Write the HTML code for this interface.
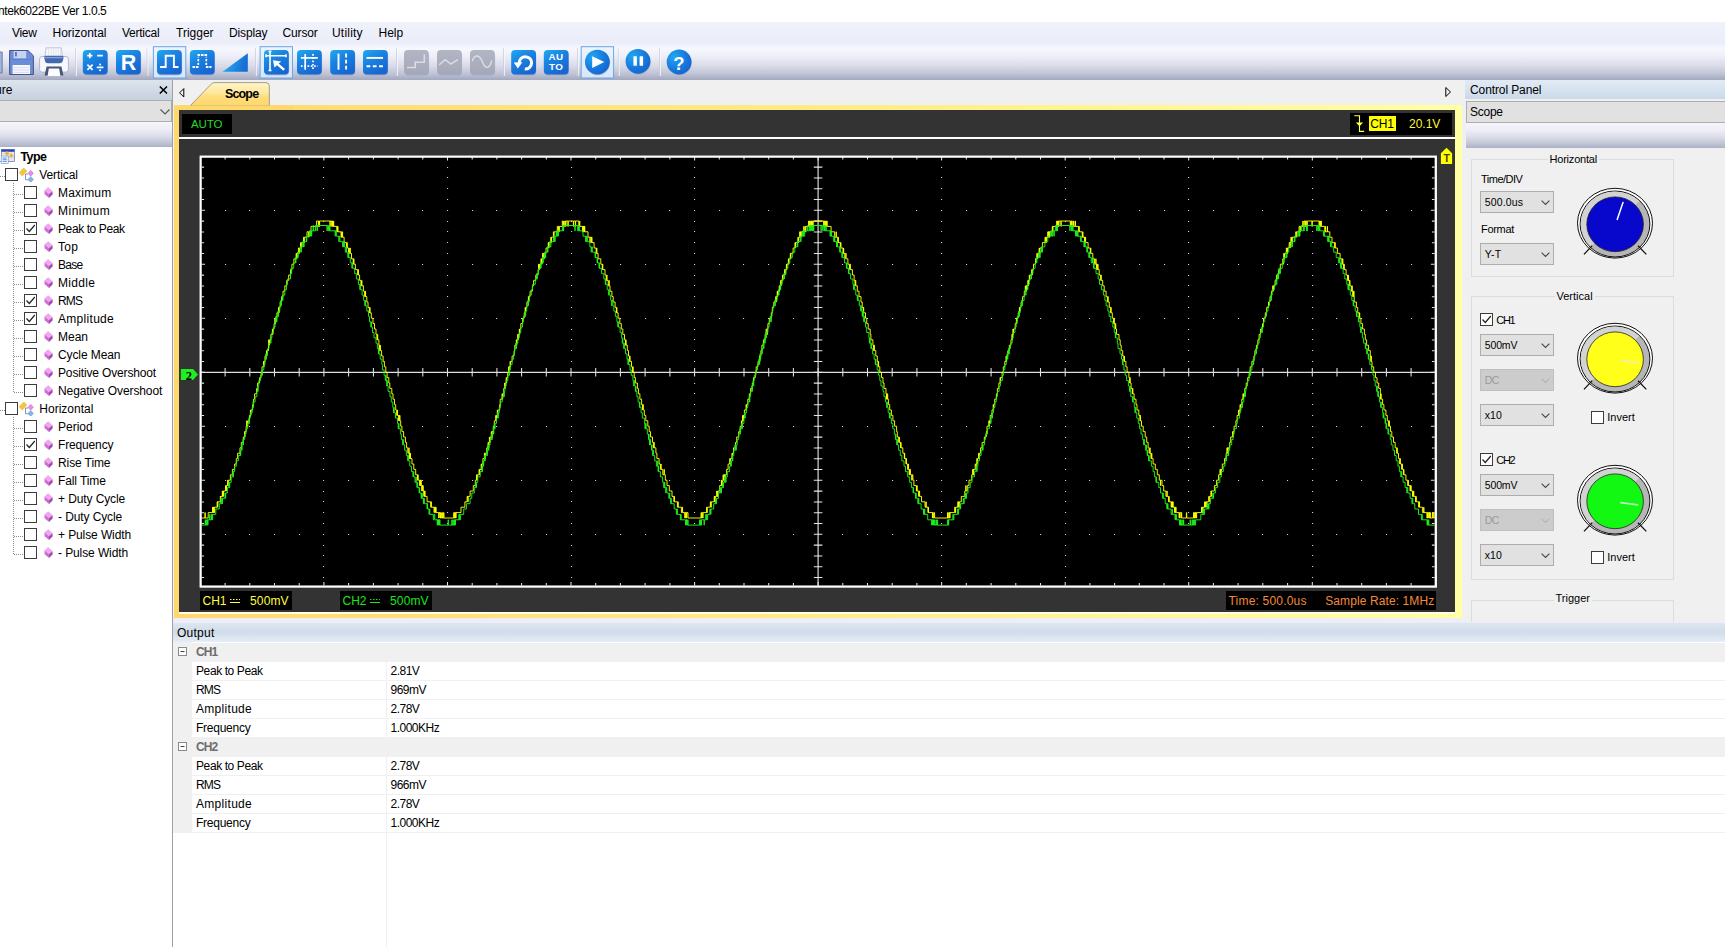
<!DOCTYPE html>
<html><head><meta charset="utf-8"><title>Hantek6022BE</title>
<style>
*{box-sizing:border-box;margin:0;padding:0}
html,body{width:1725px;height:947px;overflow:hidden;background:#fff}
body{position:relative;font-family:"Liberation Sans",sans-serif;font-size:12px;color:#000}
.a{position:absolute;white-space:nowrap}
.t{position:absolute;white-space:nowrap;line-height:14px;height:14px}
#menubar{left:0;top:22px;width:1725px;height:22px;background:linear-gradient(#eff1fb,#ebedf9)}
#toolbar{left:0;top:44px;width:1725px;height:36px;background:linear-gradient(#eff1fb 0%,#f7f8fe 14%,#ecedf7 36%,#d8dae7 62%,#bec2d4 84%,#a9adc4 97%,#a4a9c0 100%)}
#lhead{left:0;top:80px;width:172px;height:20px;background:linear-gradient(#dde4ed,#c6d1df)}
#lcombo{left:-2px;top:100px;width:174px;height:22px;background:#e1e1e1;border:1px solid #adadad}
#lstrip{left:0;top:122px;width:172px;height:25px;background:linear-gradient(#f6f7fc 0%,#ecedf6 30%,#d8dae7 60%,#bec2d4 85%,#adb1c6 100%)}
#ltree{left:0;top:147px;width:172px;height:800px;background:#fff}
#lsplit{left:172px;top:80px;width:2px;height:867px;background:#f0f0f0;border-left:1px solid #a0a0a0}
#tabbar{left:174px;top:80px;width:1291px;height:26px;background:#f0f0f0}
#scopeframe{left:173.6px;top:105.3px;width:1288px;height:512.6px;background:linear-gradient(90deg,#ffd86b,#ffffa3)}
#scopebg{left:179.3px;top:110.1px;width:1275.8px;height:501.7px;background:#333}
#rpanel{left:1465px;top:80px;width:260px;height:542px;background:#f0f0f0}
#rgap{left:1462px;top:80px;width:3px;height:542px;background:#f0f0f0}
#rhead{left:1465px;top:80px;width:260px;height:19px;background:linear-gradient(#e3ebf5,#c9d9ea)}
#rcombo{left:1466px;top:100.5px;width:262px;height:22px;background:#e1e1e1;border:1px solid #adadad}
#rstrip{left:1466px;top:122.5px;width:260px;height:25px;background:linear-gradient(#f6f7fc 0%,#ecedf6 30%,#d8dae7 60%,#bec2d4 85%,#adb1c6 100%)}
#ohead{left:173px;top:622.5px;width:1552px;height:20px;background:linear-gradient(#dde6f0,#d0dcea 45%,#e8eef6)}
#opanel{left:173px;top:642px;width:1552px;height:305px;background:#fff}
.grp{position:absolute;border:1px solid #dcdcdc}
.grp>span{position:absolute;background:#f0f0f0;padding:0 2px;line-height:14px;top:-8px}
.combo{position:absolute;width:74px;height:22px;background:#e1e1e1;border:1px solid #adadad;font-size:10.5px;line-height:21.6px;padding-left:3.5px;letter-spacing:-0.15px}
.combo.dis{background:#cccccc;border-color:#bfbfbf;color:#9a9a9a}
.combo svg{position:absolute;right:3.8px;top:8.4px}
.cb{position:absolute;width:13px;height:13px;border:1px solid #3c3c3c;background:#fff}
.cb svg{position:absolute;left:0;top:0}
.sbox{position:absolute;background:#000;height:19px;line-height:20.4px;font-size:12px}
.orow{position:absolute;left:0;width:1552px;height:19px;border-bottom:1px solid #f0f0f0}
.ohdr{position:absolute;left:0;width:1552px;height:19px;background:#f0f0f0;color:#6d6d6d;font-weight:bold}
</style></head>
<body>
<!-- title -->
<div class="t" id="title" style="left:-2px;top:4px;letter-spacing:-0.42px">ntek6022BE Ver 1.0.5</div>
<!-- menubar -->
<div class="a" id="menubar"></div>
<div class="t" style="left:12px;top:26.4px;letter-spacing:-0.3px">View</div>
<div class="t" style="left:52.5px;top:26.4px">Horizontal</div>
<div class="t" style="left:122px;top:26.4px;letter-spacing:-0.25px">Vertical</div>
<div class="t" style="left:176px;top:26.4px">Trigger</div>
<div class="t" style="left:229px;top:26.4px;letter-spacing:-0.15px">Display</div>
<div class="t" style="left:282.5px;top:26.4px;letter-spacing:-0.15px">Cursor</div>
<div class="t" style="left:332px;top:26.4px;letter-spacing:0.2px">Utility</div>
<div class="t" style="left:378.5px;top:26.4px">Help</div>
<!-- toolbar -->
<div class="a" id="toolbar"></div>
<svg class="a" style="left:0;top:44px" width="720" height="36" viewBox="0 0 720 36">
<defs>
<linearGradient id="bg" x1="0" y1="0" x2="0.6" y2="1"><stop offset="0" stop-color="#22aaf3"/><stop offset="0.45" stop-color="#1a82e0"/><stop offset="1" stop-color="#1866d0"/></linearGradient>
<linearGradient id="gg" x1="0" y1="0" x2="0" y2="1"><stop offset="0" stop-color="#b2b5c3"/><stop offset="1" stop-color="#a5a8b8"/></linearGradient>
<radialGradient id="cg" cx="0.3" cy="0.3" r="0.85"><stop offset="0" stop-color="#20a8f2"/><stop offset="0.55" stop-color="#187ade"/><stop offset="1" stop-color="#1560c8"/></radialGradient>
<linearGradient id="sel" x1="0" y1="0" x2="0" y2="1"><stop offset="0" stop-color="#edf4fd"/><stop offset="1" stop-color="#d6e6f9"/></linearGradient>
<linearGradient id="tg" x1="0" y1="0" x2="1" y2="0.2"><stop offset="0" stop-color="#25b8f4"/><stop offset="1" stop-color="#186cd4"/></linearGradient>
</defs>
<path d="M-2 8H2.2V29H-2Z" fill="#9fb4dc" stroke="#5a6a98" stroke-width="0.8"/>
<g transform="translate(9 6)">
<path d="M0.6 0.5H19L24.4 5.8V24.5H0.6Z" fill="#6b8dd8" stroke="#44558a" stroke-width="1"/>
<rect x="4.6" y="1" width="12.6" height="7.4" fill="#c6d3f1"/>
<rect x="6.2" y="2" width="1.5" height="4.4" fill="#4a5f9c"/>
<path d="M1.4 9.4H23.6" stroke="#5c7ecb" stroke-width="0.9"/>
<rect x="3.6" y="15" width="17.4" height="9" fill="#f6f8fd"/>
<path d="M4.5 17.6H20M4.5 20H20M4.5 22.4H20" stroke="#c9d1ea" stroke-width="0.7"/>
</g>
<g transform="translate(39 3)">
<path d="M7 0.8H22.4L23.4 10H6Z" fill="#f6f7fb" stroke="#b4b9cf" stroke-width="0.8"/>
<path d="M9.5 1.5V9M12 1.5V9M14.5 1.5V9M17 1.5V9M19.5 1.5V9M21.5 1.5V9" stroke="#dcdfea" stroke-width="0.7"/>
<rect x="0.6" y="9.5" width="28.8" height="15.6" rx="2.6" fill="#f7f8fc" stroke="#a8b0cf" stroke-width="0.9"/>
<path d="M6 8.8H23.6Q24.8 8.8 24.4 11.5L23.8 14Q23.2 16.2 20.6 16.2H9Q6.4 16.2 6 14L5.4 11.5Q5 8.8 6 8.8Z" fill="#4467ad"/>
<path d="M6.2 10.6H23.6" stroke="#86a2da" stroke-width="1.3"/>
<path d="M5.6 28.6L7.6 19.6H22.4L24.4 28.6Z" fill="#465475"/>
<path d="M8.6 29L9.8 21.6H20.2L21.4 29Z" fill="#fcfcfe"/>
</g>
<path d="M75.5 4V32" stroke="#c9cbd9" stroke-width="1" opacity="0.7"/><path d="M76.5 4V32" stroke="#fafaff" stroke-width="1" opacity="0.7"/>
<g transform="translate(82.8 6)"><rect x="0.5" y="1.4" width="24.6" height="24" rx="4" fill="#8092c0" opacity="0.45"/><rect x="0" y="0" width="24.8" height="24.5" rx="4" fill="url(#bg)"/><path d="M4.4 5.6H9.6M7 3V8.2M14.4 5.6H20M4.6 14.6L9.8 19.8M9.8 14.6L4.6 19.8M14 17.3H20.6" stroke="#fff" fill="none" stroke-width="1.7"/><circle cx="17.3" cy="14.4" r="1" fill="#fff"/><circle cx="17.3" cy="20.2" r="1" fill="#fff"/></g>
<g transform="translate(116 6)"><rect x="0.5" y="1.4" width="24.6" height="24" rx="4" fill="#8092c0" opacity="0.45"/><rect x="0" y="0" width="24.8" height="24.5" rx="4" fill="url(#bg)"/><text x="12.6" y="20.3" font-family="Liberation Sans,sans-serif" font-weight="bold" font-size="21.5" fill="#fff" text-anchor="middle">R</text></g>
<path d="M147 4V32" stroke="#c9cbd9" stroke-width="1" opacity="0.7"/><path d="M148 4V32" stroke="#fafaff" stroke-width="1" opacity="0.7"/>
<rect x="153.4" y="2.7" width="32.4" height="31.3" fill="url(#sel)" stroke="#6aa5e6" stroke-width="1"/>
<g transform="translate(157 6)"><rect x="0.5" y="1.4" width="24.6" height="24" rx="4" fill="#8092c0" opacity="0.45"/><rect x="0" y="0" width="24.8" height="24.5" rx="4" fill="url(#bg)"/><path d="M3 17H8.7V5.7H16.9V17H21.5" stroke="#fff" fill="none" stroke-width="1.9"/></g>
<g transform="translate(189.9 6)"><rect x="0.5" y="1.4" width="24.6" height="24" rx="4" fill="#8092c0" opacity="0.45"/><rect x="0" y="0" width="24.8" height="24.5" rx="4" fill="url(#bg)"/><path d="M2.6 17H8.6M16 17H21.6" stroke="#fff" fill="none" stroke-width="1.8" stroke-dasharray="2.6 0.8"/><path d="M8.4 15V6.8M16.4 15V6.8" stroke="#fff" fill="none" stroke-width="1.7" stroke-dasharray="2.2 1.5"/><path d="M7.6 5H17.2" stroke="#fff" fill="none" stroke-width="1.8" stroke-dasharray="2.6 0.9"/></g>
<path d="M222.6 27.8L247.8 9.2V27.8Z" fill="url(#tg)"/>
<path d="M255.5 4V32" stroke="#c9cbd9" stroke-width="1" opacity="0.7"/><path d="M256.5 4V32" stroke="#fafaff" stroke-width="1" opacity="0.7"/>
<rect x="260.1" y="2.7" width="32.4" height="31.3" fill="url(#sel)" stroke="#6aa5e6" stroke-width="1"/>
<g transform="translate(264 6)"><rect x="0.5" y="1.4" width="24.6" height="24" rx="4" fill="#8092c0" opacity="0.45"/><rect x="0" y="0" width="24.8" height="24.5" rx="4" fill="url(#bg)"/><path d="M2 5.7H22M6 1.4V20.5M2 4.2V7.2M22 4.2V7.2M4.5 1.4H7.5M4.5 20.5H7.5" stroke="#fff" fill="none" stroke-width="1.6"/><path d="M9 10.2L17.2 11.6L14.6 13.4L21 19L19.4 20.8L13 15.2L10.4 17.6Z" fill="#fff"/></g>
<g transform="translate(297 6)"><rect x="0.5" y="1.4" width="24.6" height="24" rx="4" fill="#8092c0" opacity="0.45"/><rect x="0" y="0" width="24.8" height="24.5" rx="4" fill="url(#bg)"/><path d="M8.2 4V19.7M3.9 7.9H20.8" stroke="#fff" fill="none" stroke-width="1.7"/><path d="M16 4V19.7M3.9 16.2H20.8" stroke="#fff" fill="none" stroke-width="1.7" stroke-dasharray="1.7 1.6"/></g>
<g transform="translate(330.2 6)"><rect x="0.5" y="1.4" width="24.6" height="24" rx="4" fill="#8092c0" opacity="0.45"/><rect x="0" y="0" width="24.8" height="24.5" rx="4" fill="url(#bg)"/><path d="M8.3 3.6V19.7" stroke="#fff" fill="none" stroke-width="1.9"/><path d="M15.9 3.6V19.7" stroke="#fff" fill="none" stroke-width="1.9" stroke-dasharray="3.8 2.3"/></g>
<g transform="translate(363 6)"><rect x="0.5" y="1.4" width="24.6" height="24" rx="4" fill="#8092c0" opacity="0.45"/><rect x="0" y="0" width="24.8" height="24.5" rx="4" fill="url(#bg)"/><path d="M3.5 7.9H20" stroke="#fff" fill="none" stroke-width="1.9"/><path d="M3.5 16.2H20" stroke="#fff" fill="none" stroke-width="1.9" stroke-dasharray="3.8 2.5"/></g>
<path d="M396.5 4V32" stroke="#c9cbd9" stroke-width="1" opacity="0.7"/><path d="M397.5 4V32" stroke="#fafaff" stroke-width="1" opacity="0.7"/>
<g transform="translate(404 6)"><rect x="0.5" y="1.4" width="24.6" height="24" rx="4" fill="#8092c0" opacity="0.45"/><rect x="0" y="0" width="24.8" height="24.5" rx="4" fill="url(#gg)"/><path d="M3 17.5H11.2V12.3H20.3V4.4" stroke="#dadce6" fill="none" stroke-width="1.6"/></g>
<g transform="translate(437 6)"><rect x="0.5" y="1.4" width="24.6" height="24" rx="4" fill="#8092c0" opacity="0.45"/><rect x="0" y="0" width="24.8" height="24.5" rx="4" fill="url(#gg)"/><path d="M2.1 14.9L8.2 9.7L13.9 14L20.8 9.7" stroke="#dadce6" fill="none" stroke-width="1.5"/></g>
<g transform="translate(470 6)"><rect x="0.5" y="1.4" width="24.6" height="24" rx="4" fill="#8092c0" opacity="0.45"/><rect x="0" y="0" width="24.8" height="24.5" rx="4" fill="url(#gg)"/><path d="M2.2 11.4C4 5 9 3.5 12.2 11.5S19.5 19.5 21.7 10.5" stroke="#dadce6" fill="none" stroke-width="1.5"/></g>
<path d="M503.5 4V32" stroke="#c9cbd9" stroke-width="1" opacity="0.7"/><path d="M504.5 4V32" stroke="#fafaff" stroke-width="1" opacity="0.7"/>
<g transform="translate(511.2 6)"><rect x="0.5" y="1.4" width="24.6" height="24" rx="4" fill="#8092c0" opacity="0.45"/><rect x="0" y="0" width="24.8" height="24.5" rx="4" fill="url(#bg)"/><path d="M8 13A6.2 6.2 0 1 1 13.6 19" stroke="#fff" fill="none" stroke-width="3"/><path d="M2.6 12.4L11.2 12.2L6.6 18.6Z" fill="#fff"/></g>
<g transform="translate(543.8 6)"><rect x="0.5" y="1.4" width="24.6" height="24" rx="4" fill="#8092c0" opacity="0.45"/><rect x="0" y="0" width="24.8" height="24.5" rx="4" fill="url(#bg)"/><text x="12.3" y="10.1" font-family="Liberation Sans,sans-serif" font-weight="bold" font-size="9.8" fill="#fff" text-anchor="middle" letter-spacing="0.5">AU</text><text x="12.3" y="20.1" font-family="Liberation Sans,sans-serif" font-weight="bold" font-size="9.8" fill="#fff" text-anchor="middle" letter-spacing="0.5">TO</text></g>
<path d="M577.5 4V32" stroke="#c9cbd9" stroke-width="1" opacity="0.7"/><path d="M578.5 4V32" stroke="#fafaff" stroke-width="1" opacity="0.7"/>
<rect x="581.2" y="2.7" width="32.4" height="31.3" fill="url(#sel)" stroke="#6aa5e6" stroke-width="1"/>
<circle cx="597.8" cy="19.0" r="12.3" fill="#8092c0" opacity="0.45"/><circle cx="597.4" cy="18.1" r="12.4" fill="url(#cg)"/><path d="M592.2 12.2V23.9L604.3 18Z" fill="#fff"/>
<path d="M618.3 4V32" stroke="#c9cbd9" stroke-width="1" opacity="0.7"/><path d="M619.3 4V32" stroke="#fafaff" stroke-width="1" opacity="0.7"/>
<circle cx="638.4" cy="18.2" r="12.3" fill="#8092c0" opacity="0.45"/><circle cx="638" cy="17.3" r="12.4" fill="url(#cg)"/><rect x="633.4" y="12.2" width="3.5" height="9.6" rx="0.6" fill="#fff"/><rect x="639.6" y="12.2" width="3.5" height="9.6" rx="0.6" fill="#fff"/>
<path d="M659.5 4V32" stroke="#c9cbd9" stroke-width="1" opacity="0.7"/><path d="M660.5 4V32" stroke="#fafaff" stroke-width="1" opacity="0.7"/>
<circle cx="679.5" cy="18.9" r="12.3" fill="#8092c0" opacity="0.45"/><circle cx="679.1" cy="18" r="12.4" fill="url(#cg)"/><text x="678.9" y="25.6" font-family="Liberation Sans,sans-serif" font-weight="bold" font-size="18.5" fill="#fff" text-anchor="middle">?</text>
</svg>
<!-- left panel -->
<div class="a" id="lhead"></div>
<div class="t" style="left:-5px;top:83px">ure</div>
<svg class="a" style="left:159px;top:86px" width="9" height="8" viewBox="0 0 9 8"><path d="M0.8 0.5L8 7.5M8 0.5L0.8 7.5" stroke="#000" stroke-width="1.5" fill="none"/></svg>
<div class="a" id="lcombo"></div>
<svg class="a" style="left:159.5px;top:109px" width="10" height="6" viewBox="0 0 10 6"><path d="M0.5 0.5L5 5L9.5 0.5" stroke="#555" stroke-width="1.1" fill="none"/></svg>
<div class="a" id="lstrip"></div>
<div class="a" id="ltree"></div>
<div class="a" id="lsplit"></div>
<svg class="a" style="left:0;top:148px" width="16" height="17" viewBox="0 148 16 17"><rect x="1.4" y="149.4" width="13" height="12" fill="#e9e4ee" stroke="#7880a8" stroke-width="0.8"/><rect x="1.4" y="149.4" width="13" height="2.4" fill="#2b47b8"/><path d="M8 152.5V161M2 157H14" stroke="#b0a8c0" stroke-width="0.6"/><path d="M4.6 153.3h4.6M6.9 151.2v4.2M9.6 155.4h3.4M11.3 153.6v3.6" stroke="#e8b010" stroke-width="1.3"/><rect x="1.2" y="156" width="7" height="7.6" fill="#f4f8ff" stroke="#7f9fd0" stroke-width="0.7"/><path d="M2.6 158h4.2M2.6 159.7h4.2M2.6 161.4h4.2" stroke="#4a86d8" stroke-width="0.9"/><path d="M0 161.5h1.2" stroke="#7880a8" stroke-width="0.8"/></svg>
<div class="t" style="left:20.5px;top:150px;font-weight:bold;font-size:12.5px;letter-spacing:-0.6px">Type</div>
<svg class="a" style="left:0;top:147px" width="60" height="420" viewBox="0 147 60 420" shape-rendering="crispEdges">
<path d="M0 176.5H5M0 410.5H5M13.5 183V392.5M13.5 417V554.5M14 194.5H24M14 212.5H24M14 230.5H24M14 248.5H24M14 266.5H24M14 284.5H24M14 302.5H24M14 320.5H24M14 338.5H24M14 356.5H24M14 374.5H24M14 392.5H24M14 428.5H24M14 446.5H24M14 464.5H24M14 482.5H24M14 500.5H24M14 518.5H24M14 536.5H24M14 554.5H24" stroke="#8c8c8c" stroke-width="1" stroke-dasharray="1 1" fill="none"/></svg>
<div class="cb" style="left:5px;top:168.0px"></div>
<svg class="a" style="left:17.5px;top:165.5px" width="17" height="16" viewBox="17.5 165.5 17 16"><path d="M25 173.5V179.3H28M25 173.5H27.6" stroke="#6f8fa8" stroke-width="0.9" fill="none"/><path d="M18.6 172.3L23.2 167.4L26.4 170.6L21.8 175.5Z" fill="#f5c53a" stroke="#d8a420" stroke-width="0.4"/><path d="M30.2 169.8L33 172.8L30.2 175.8L27.4 172.8Z" fill="#e68de8" stroke="#c060c8" stroke-width="0.4"/><path d="M30.2 175.9L33 178.9L30.2 181.9L27.4 178.9Z" fill="#85b2ea" stroke="#5588cc" stroke-width="0.4"/></svg>
<div class="t" style="left:39.3px;top:168.0px;letter-spacing:-0.1px">Vertical</div>
<div class="cb" style="left:24px;top:186.0px"></div>
<svg class="a" style="left:43.5px;top:187.0px" width="10" height="12" viewBox="0 0 10 12"><path d="M4.2 0.2L8.6 4.2L5 7L0.4 3.5Z" fill="#f0a4f1"/><path d="M0.4 3.5L5 7V10.9L0.6 7.3Z" fill="#cd6fd5"/><path d="M8.6 4.2V7.6L5 10.9V7Z" fill="#a24db0"/></svg>
<div class="t" style="left:58px;top:186.0px;letter-spacing:0.2px">Maximum</div>
<div class="cb" style="left:24px;top:204.0px"></div>
<svg class="a" style="left:43.5px;top:205.0px" width="10" height="12" viewBox="0 0 10 12"><path d="M4.2 0.2L8.6 4.2L5 7L0.4 3.5Z" fill="#f0a4f1"/><path d="M0.4 3.5L5 7V10.9L0.6 7.3Z" fill="#cd6fd5"/><path d="M8.6 4.2V7.6L5 10.9V7Z" fill="#a24db0"/></svg>
<div class="t" style="left:58px;top:204.0px;letter-spacing:0.5px">Minimum</div>
<div class="cb" style="left:24px;top:222.0px"><svg width="11" height="11" viewBox="0 0 11 11"><path d="M1.5 5.5L4.3 8.5L9.8 2" stroke="#222" stroke-width="1.2" fill="none"/></svg></div>
<svg class="a" style="left:43.5px;top:223.0px" width="10" height="12" viewBox="0 0 10 12"><path d="M4.2 0.2L8.6 4.2L5 7L0.4 3.5Z" fill="#f0a4f1"/><path d="M0.4 3.5L5 7V10.9L0.6 7.3Z" fill="#cd6fd5"/><path d="M8.6 4.2V7.6L5 10.9V7Z" fill="#a24db0"/></svg>
<div class="t" style="left:58px;top:222.0px;letter-spacing:-0.4px">Peak to Peak</div>
<div class="cb" style="left:24px;top:240.0px"></div>
<svg class="a" style="left:43.5px;top:241.0px" width="10" height="12" viewBox="0 0 10 12"><path d="M4.2 0.2L8.6 4.2L5 7L0.4 3.5Z" fill="#f0a4f1"/><path d="M0.4 3.5L5 7V10.9L0.6 7.3Z" fill="#cd6fd5"/><path d="M8.6 4.2V7.6L5 10.9V7Z" fill="#a24db0"/></svg>
<div class="t" style="left:58px;top:240.0px;letter-spacing:0.3px">Top</div>
<div class="cb" style="left:24px;top:258.0px"></div>
<svg class="a" style="left:43.5px;top:259.0px" width="10" height="12" viewBox="0 0 10 12"><path d="M4.2 0.2L8.6 4.2L5 7L0.4 3.5Z" fill="#f0a4f1"/><path d="M0.4 3.5L5 7V10.9L0.6 7.3Z" fill="#cd6fd5"/><path d="M8.6 4.2V7.6L5 10.9V7Z" fill="#a24db0"/></svg>
<div class="t" style="left:58px;top:258.0px;letter-spacing:-0.7px">Base</div>
<div class="cb" style="left:24px;top:276.0px"></div>
<svg class="a" style="left:43.5px;top:277.0px" width="10" height="12" viewBox="0 0 10 12"><path d="M4.2 0.2L8.6 4.2L5 7L0.4 3.5Z" fill="#f0a4f1"/><path d="M0.4 3.5L5 7V10.9L0.6 7.3Z" fill="#cd6fd5"/><path d="M8.6 4.2V7.6L5 10.9V7Z" fill="#a24db0"/></svg>
<div class="t" style="left:58px;top:276.0px;letter-spacing:0.3px">Middle</div>
<div class="cb" style="left:24px;top:294.0px"><svg width="11" height="11" viewBox="0 0 11 11"><path d="M1.5 5.5L4.3 8.5L9.8 2" stroke="#222" stroke-width="1.2" fill="none"/></svg></div>
<svg class="a" style="left:43.5px;top:295.0px" width="10" height="12" viewBox="0 0 10 12"><path d="M4.2 0.2L8.6 4.2L5 7L0.4 3.5Z" fill="#f0a4f1"/><path d="M0.4 3.5L5 7V10.9L0.6 7.3Z" fill="#cd6fd5"/><path d="M8.6 4.2V7.6L5 10.9V7Z" fill="#a24db0"/></svg>
<div class="t" style="left:58px;top:294.0px;letter-spacing:-0.8px">RMS</div>
<div class="cb" style="left:24px;top:312.0px"><svg width="11" height="11" viewBox="0 0 11 11"><path d="M1.5 5.5L4.3 8.5L9.8 2" stroke="#222" stroke-width="1.2" fill="none"/></svg></div>
<svg class="a" style="left:43.5px;top:313.0px" width="10" height="12" viewBox="0 0 10 12"><path d="M4.2 0.2L8.6 4.2L5 7L0.4 3.5Z" fill="#f0a4f1"/><path d="M0.4 3.5L5 7V10.9L0.6 7.3Z" fill="#cd6fd5"/><path d="M8.6 4.2V7.6L5 10.9V7Z" fill="#a24db0"/></svg>
<div class="t" style="left:58px;top:312.0px;letter-spacing:0.3px">Amplitude</div>
<div class="cb" style="left:24px;top:330.0px"></div>
<svg class="a" style="left:43.5px;top:331.0px" width="10" height="12" viewBox="0 0 10 12"><path d="M4.2 0.2L8.6 4.2L5 7L0.4 3.5Z" fill="#f0a4f1"/><path d="M0.4 3.5L5 7V10.9L0.6 7.3Z" fill="#cd6fd5"/><path d="M8.6 4.2V7.6L5 10.9V7Z" fill="#a24db0"/></svg>
<div class="t" style="left:58px;top:330.0px">Mean</div>
<div class="cb" style="left:24px;top:348.0px"></div>
<svg class="a" style="left:43.5px;top:349.0px" width="10" height="12" viewBox="0 0 10 12"><path d="M4.2 0.2L8.6 4.2L5 7L0.4 3.5Z" fill="#f0a4f1"/><path d="M0.4 3.5L5 7V10.9L0.6 7.3Z" fill="#cd6fd5"/><path d="M8.6 4.2V7.6L5 10.9V7Z" fill="#a24db0"/></svg>
<div class="t" style="left:58px;top:348.0px;letter-spacing:-0.1px">Cycle Mean</div>
<div class="cb" style="left:24px;top:366.0px"></div>
<svg class="a" style="left:43.5px;top:367.0px" width="10" height="12" viewBox="0 0 10 12"><path d="M4.2 0.2L8.6 4.2L5 7L0.4 3.5Z" fill="#f0a4f1"/><path d="M0.4 3.5L5 7V10.9L0.6 7.3Z" fill="#cd6fd5"/><path d="M8.6 4.2V7.6L5 10.9V7Z" fill="#a24db0"/></svg>
<div class="t" style="left:58px;top:366.0px;letter-spacing:-0.15px">Positive Overshoot</div>
<div class="cb" style="left:24px;top:384.0px"></div>
<svg class="a" style="left:43.5px;top:385.0px" width="10" height="12" viewBox="0 0 10 12"><path d="M4.2 0.2L8.6 4.2L5 7L0.4 3.5Z" fill="#f0a4f1"/><path d="M0.4 3.5L5 7V10.9L0.6 7.3Z" fill="#cd6fd5"/><path d="M8.6 4.2V7.6L5 10.9V7Z" fill="#a24db0"/></svg>
<div class="t" style="left:58px;top:384.0px;letter-spacing:-0.1px">Negative Overshoot</div>
<div class="cb" style="left:5px;top:402.0px"></div>
<svg class="a" style="left:17.5px;top:399.5px" width="17" height="16" viewBox="17.5 165.5 17 16"><path d="M25 173.5V179.3H28M25 173.5H27.6" stroke="#6f8fa8" stroke-width="0.9" fill="none"/><path d="M18.6 172.3L23.2 167.4L26.4 170.6L21.8 175.5Z" fill="#f5c53a" stroke="#d8a420" stroke-width="0.4"/><path d="M30.2 169.8L33 172.8L30.2 175.8L27.4 172.8Z" fill="#e68de8" stroke="#c060c8" stroke-width="0.4"/><path d="M30.2 175.9L33 178.9L30.2 181.9L27.4 178.9Z" fill="#85b2ea" stroke="#5588cc" stroke-width="0.4"/></svg>
<div class="t" style="left:39.3px;top:402.0px">Horizontal</div>
<div class="cb" style="left:24px;top:420.0px"></div>
<svg class="a" style="left:43.5px;top:421.0px" width="10" height="12" viewBox="0 0 10 12"><path d="M4.2 0.2L8.6 4.2L5 7L0.4 3.5Z" fill="#f0a4f1"/><path d="M0.4 3.5L5 7V10.9L0.6 7.3Z" fill="#cd6fd5"/><path d="M8.6 4.2V7.6L5 10.9V7Z" fill="#a24db0"/></svg>
<div class="t" style="left:58px;top:420.0px">Period</div>
<div class="cb" style="left:24px;top:438.0px"><svg width="11" height="11" viewBox="0 0 11 11"><path d="M1.5 5.5L4.3 8.5L9.8 2" stroke="#222" stroke-width="1.2" fill="none"/></svg></div>
<svg class="a" style="left:43.5px;top:439.0px" width="10" height="12" viewBox="0 0 10 12"><path d="M4.2 0.2L8.6 4.2L5 7L0.4 3.5Z" fill="#f0a4f1"/><path d="M0.4 3.5L5 7V10.9L0.6 7.3Z" fill="#cd6fd5"/><path d="M8.6 4.2V7.6L5 10.9V7Z" fill="#a24db0"/></svg>
<div class="t" style="left:58px;top:438.0px;letter-spacing:-0.15px">Frequency</div>
<div class="cb" style="left:24px;top:456.0px"></div>
<svg class="a" style="left:43.5px;top:457.0px" width="10" height="12" viewBox="0 0 10 12"><path d="M4.2 0.2L8.6 4.2L5 7L0.4 3.5Z" fill="#f0a4f1"/><path d="M0.4 3.5L5 7V10.9L0.6 7.3Z" fill="#cd6fd5"/><path d="M8.6 4.2V7.6L5 10.9V7Z" fill="#a24db0"/></svg>
<div class="t" style="left:58px;top:456.0px;letter-spacing:-0.1px">Rise Time</div>
<div class="cb" style="left:24px;top:474.0px"></div>
<svg class="a" style="left:43.5px;top:475.0px" width="10" height="12" viewBox="0 0 10 12"><path d="M4.2 0.2L8.6 4.2L5 7L0.4 3.5Z" fill="#f0a4f1"/><path d="M0.4 3.5L5 7V10.9L0.6 7.3Z" fill="#cd6fd5"/><path d="M8.6 4.2V7.6L5 10.9V7Z" fill="#a24db0"/></svg>
<div class="t" style="left:58px;top:474.0px;letter-spacing:-0.1px">Fall Time</div>
<div class="cb" style="left:24px;top:492.0px"></div>
<svg class="a" style="left:43.5px;top:493.0px" width="10" height="12" viewBox="0 0 10 12"><path d="M4.2 0.2L8.6 4.2L5 7L0.4 3.5Z" fill="#f0a4f1"/><path d="M0.4 3.5L5 7V10.9L0.6 7.3Z" fill="#cd6fd5"/><path d="M8.6 4.2V7.6L5 10.9V7Z" fill="#a24db0"/></svg>
<div class="t" style="left:58px;top:492.0px;letter-spacing:-0.1px">+ Duty Cycle</div>
<div class="cb" style="left:24px;top:510.0px"></div>
<svg class="a" style="left:43.5px;top:511.0px" width="10" height="12" viewBox="0 0 10 12"><path d="M4.2 0.2L8.6 4.2L5 7L0.4 3.5Z" fill="#f0a4f1"/><path d="M0.4 3.5L5 7V10.9L0.6 7.3Z" fill="#cd6fd5"/><path d="M8.6 4.2V7.6L5 10.9V7Z" fill="#a24db0"/></svg>
<div class="t" style="left:58px;top:510.0px;letter-spacing:-0.1px">- Duty Cycle</div>
<div class="cb" style="left:24px;top:528.0px"></div>
<svg class="a" style="left:43.5px;top:529.0px" width="10" height="12" viewBox="0 0 10 12"><path d="M4.2 0.2L8.6 4.2L5 7L0.4 3.5Z" fill="#f0a4f1"/><path d="M0.4 3.5L5 7V10.9L0.6 7.3Z" fill="#cd6fd5"/><path d="M8.6 4.2V7.6L5 10.9V7Z" fill="#a24db0"/></svg>
<div class="t" style="left:58px;top:528.0px;letter-spacing:-0.1px">+ Pulse Width</div>
<div class="cb" style="left:24px;top:546.0px"></div>
<svg class="a" style="left:43.5px;top:547.0px" width="10" height="12" viewBox="0 0 10 12"><path d="M4.2 0.2L8.6 4.2L5 7L0.4 3.5Z" fill="#f0a4f1"/><path d="M0.4 3.5L5 7V10.9L0.6 7.3Z" fill="#cd6fd5"/><path d="M8.6 4.2V7.6L5 10.9V7Z" fill="#a24db0"/></svg>
<div class="t" style="left:58px;top:546.0px;letter-spacing:-0.1px">- Pulse Width</div>
<!-- center -->
<div class="a" id="tabbar"></div>
<div class="a" id="scopeframe"></div>
<!-- tab -->
<svg class="a" style="left:174px;top:80px" width="120" height="30" viewBox="0 0 120 30">
<defs><linearGradient id="tabg" x1="0" y1="0" x2="0" y2="1"><stop offset="0" stop-color="#fff4c8"/><stop offset="0.4" stop-color="#ffe9a2"/><stop offset="0.6" stop-color="#ffdd7c"/><stop offset="1" stop-color="#ffd86b"/></linearGradient></defs>
<path d="M16 26 L37.6 3.7 Q38.8 2.6 40.8 2.6 H92 Q95.3 2.6 95.3 6 V26 Z" fill="url(#tabg)" stroke="#a39d8e" stroke-width="1"/>
<rect x="0" y="25.6" width="120" height="4" fill="#ffd86b"/>
<path d="M9.8 8.6V17L5.6 12.8Z" fill="none" stroke="#000" stroke-width="1"/>
</svg>
<div class="t" style="left:225px;top:87.3px;font-weight:bold;font-size:12.5px;letter-spacing:-0.85px">Scope</div>
<svg class="a" style="left:1442.5px;top:86px" width="10" height="12" viewBox="0 0 10 12"><path d="M2.8 1.5V10.5L7.5 6Z" fill="none" stroke="#000" stroke-width="1"/></svg>
<div class="a" id="scopebg"></div>
<div class="a" style="left:179.3px;top:611.8px;width:1275.8px;height:2.2px;background:#fffceb"></div>
<div class="a" style="left:173px;top:618px;width:1552px;height:5px;background:#eeeef8"></div>
<!-- scope status boxes -->
<div class="sbox" style="left:182px;top:113.5px;width:50px;height:20.5px;color:#22dd22;padding-left:9px;line-height:21.5px;font-size:11.5px;letter-spacing:-0.1px">AUTO</div>
<div class="a" style="left:179.3px;top:137.1px;width:1275.6px;height:2.2px;background:#fff"></div>
<div class="sbox" style="left:1350px;top:112.5px;width:102px;height:22.4px"></div>
<svg class="a" style="left:1352px;top:113px" width="14" height="21" viewBox="1352 113 14 21"><path d="M1354.3 115.7H1359.5V131.4H1364.2" fill="none" stroke="#ffff55" stroke-width="1.1"/><path d="M1355.8 122.5H1363.2L1359.5 126.2Z" fill="#ffff55"/></svg>
<div class="a" style="left:1368.9px;top:116.1px;width:27.1px;height:14.8px;background:#ffff00"></div>
<div class="t" style="left:1370.3px;top:116.8px;color:#000;font-size:12px;letter-spacing:-0.2px">CH1</div>
<div class="t" style="left:1409px;top:117px;color:#f8f840">20.1V</div>
<svg class="a" style="left:1440px;top:147px" width="14" height="18" viewBox="1440 147 14 18"><path d="M1440.9 164.1V153.3L1446.5 147.7L1452.1 153.3V164.1Z" fill="#ffff00"/></svg>
<div class="t" style="left:1443.6px;top:150.8px;font-size:10.5px;font-weight:bold;color:#4a4400">T</div>
<svg id="plot" width="1725" height="947" viewBox="0 0 1725 947" style="position:absolute;left:0;top:0" shape-rendering="crispEdges">
<rect x="199" y="155" width="1238" height="433" fill="#000"/>
<path d="M225 210.5h1.1M249 210.5h1.1M274 210.5h1.1M299 210.5h1.1M323 210.5h1.1M348 210.5h1.1M373 210.5h1.1M398 210.5h1.1M422 210.5h1.1M447 210.5h1.1M472 210.5h1.1M496 210.5h1.1M521 210.5h1.1M546 210.5h1.1M571 210.5h1.1M595 210.5h1.1M620 210.5h1.1M645 210.5h1.1M669 210.5h1.1M694 210.5h1.1M719 210.5h1.1M743 210.5h1.1M768 210.5h1.1M793 210.5h1.1M818 210.5h1.1M842 210.5h1.1M867 210.5h1.1M892 210.5h1.1M916 210.5h1.1M941 210.5h1.1M966 210.5h1.1M991 210.5h1.1M1015 210.5h1.1M1040 210.5h1.1M1065 210.5h1.1M1089 210.5h1.1M1114 210.5h1.1M1139 210.5h1.1M1164 210.5h1.1M1188 210.5h1.1M1213 210.5h1.1M1238 210.5h1.1M1262 210.5h1.1M1287 210.5h1.1M1312 210.5h1.1M1336 210.5h1.1M1361 210.5h1.1M1386 210.5h1.1M1411 210.5h1.1M225 264.5h1.1M249 264.5h1.1M274 264.5h1.1M299 264.5h1.1M323 264.5h1.1M348 264.5h1.1M373 264.5h1.1M398 264.5h1.1M422 264.5h1.1M447 264.5h1.1M472 264.5h1.1M496 264.5h1.1M521 264.5h1.1M546 264.5h1.1M571 264.5h1.1M595 264.5h1.1M620 264.5h1.1M645 264.5h1.1M669 264.5h1.1M694 264.5h1.1M719 264.5h1.1M743 264.5h1.1M768 264.5h1.1M793 264.5h1.1M818 264.5h1.1M842 264.5h1.1M867 264.5h1.1M892 264.5h1.1M916 264.5h1.1M941 264.5h1.1M966 264.5h1.1M991 264.5h1.1M1015 264.5h1.1M1040 264.5h1.1M1065 264.5h1.1M1089 264.5h1.1M1114 264.5h1.1M1139 264.5h1.1M1164 264.5h1.1M1188 264.5h1.1M1213 264.5h1.1M1238 264.5h1.1M1262 264.5h1.1M1287 264.5h1.1M1312 264.5h1.1M1336 264.5h1.1M1361 264.5h1.1M1386 264.5h1.1M1411 264.5h1.1M225 318.5h1.1M249 318.5h1.1M274 318.5h1.1M299 318.5h1.1M323 318.5h1.1M348 318.5h1.1M373 318.5h1.1M398 318.5h1.1M422 318.5h1.1M447 318.5h1.1M472 318.5h1.1M496 318.5h1.1M521 318.5h1.1M546 318.5h1.1M571 318.5h1.1M595 318.5h1.1M620 318.5h1.1M645 318.5h1.1M669 318.5h1.1M694 318.5h1.1M719 318.5h1.1M743 318.5h1.1M768 318.5h1.1M793 318.5h1.1M818 318.5h1.1M842 318.5h1.1M867 318.5h1.1M892 318.5h1.1M916 318.5h1.1M941 318.5h1.1M966 318.5h1.1M991 318.5h1.1M1015 318.5h1.1M1040 318.5h1.1M1065 318.5h1.1M1089 318.5h1.1M1114 318.5h1.1M1139 318.5h1.1M1164 318.5h1.1M1188 318.5h1.1M1213 318.5h1.1M1238 318.5h1.1M1262 318.5h1.1M1287 318.5h1.1M1312 318.5h1.1M1336 318.5h1.1M1361 318.5h1.1M1386 318.5h1.1M1411 318.5h1.1M225 372.5h1.1M249 372.5h1.1M274 372.5h1.1M299 372.5h1.1M323 372.5h1.1M348 372.5h1.1M373 372.5h1.1M398 372.5h1.1M422 372.5h1.1M447 372.5h1.1M472 372.5h1.1M496 372.5h1.1M521 372.5h1.1M546 372.5h1.1M571 372.5h1.1M595 372.5h1.1M620 372.5h1.1M645 372.5h1.1M669 372.5h1.1M694 372.5h1.1M719 372.5h1.1M743 372.5h1.1M768 372.5h1.1M793 372.5h1.1M818 372.5h1.1M842 372.5h1.1M867 372.5h1.1M892 372.5h1.1M916 372.5h1.1M941 372.5h1.1M966 372.5h1.1M991 372.5h1.1M1015 372.5h1.1M1040 372.5h1.1M1065 372.5h1.1M1089 372.5h1.1M1114 372.5h1.1M1139 372.5h1.1M1164 372.5h1.1M1188 372.5h1.1M1213 372.5h1.1M1238 372.5h1.1M1262 372.5h1.1M1287 372.5h1.1M1312 372.5h1.1M1336 372.5h1.1M1361 372.5h1.1M1386 372.5h1.1M1411 372.5h1.1M225 426.5h1.1M249 426.5h1.1M274 426.5h1.1M299 426.5h1.1M323 426.5h1.1M348 426.5h1.1M373 426.5h1.1M398 426.5h1.1M422 426.5h1.1M447 426.5h1.1M472 426.5h1.1M496 426.5h1.1M521 426.5h1.1M546 426.5h1.1M571 426.5h1.1M595 426.5h1.1M620 426.5h1.1M645 426.5h1.1M669 426.5h1.1M694 426.5h1.1M719 426.5h1.1M743 426.5h1.1M768 426.5h1.1M793 426.5h1.1M818 426.5h1.1M842 426.5h1.1M867 426.5h1.1M892 426.5h1.1M916 426.5h1.1M941 426.5h1.1M966 426.5h1.1M991 426.5h1.1M1015 426.5h1.1M1040 426.5h1.1M1065 426.5h1.1M1089 426.5h1.1M1114 426.5h1.1M1139 426.5h1.1M1164 426.5h1.1M1188 426.5h1.1M1213 426.5h1.1M1238 426.5h1.1M1262 426.5h1.1M1287 426.5h1.1M1312 426.5h1.1M1336 426.5h1.1M1361 426.5h1.1M1386 426.5h1.1M1411 426.5h1.1M225 480.5h1.1M249 480.5h1.1M274 480.5h1.1M299 480.5h1.1M323 480.5h1.1M348 480.5h1.1M373 480.5h1.1M398 480.5h1.1M422 480.5h1.1M447 480.5h1.1M472 480.5h1.1M496 480.5h1.1M521 480.5h1.1M546 480.5h1.1M571 480.5h1.1M595 480.5h1.1M620 480.5h1.1M645 480.5h1.1M669 480.5h1.1M694 480.5h1.1M719 480.5h1.1M743 480.5h1.1M768 480.5h1.1M793 480.5h1.1M818 480.5h1.1M842 480.5h1.1M867 480.5h1.1M892 480.5h1.1M916 480.5h1.1M941 480.5h1.1M966 480.5h1.1M991 480.5h1.1M1015 480.5h1.1M1040 480.5h1.1M1065 480.5h1.1M1089 480.5h1.1M1114 480.5h1.1M1139 480.5h1.1M1164 480.5h1.1M1188 480.5h1.1M1213 480.5h1.1M1238 480.5h1.1M1262 480.5h1.1M1287 480.5h1.1M1312 480.5h1.1M1336 480.5h1.1M1361 480.5h1.1M1386 480.5h1.1M1411 480.5h1.1M225 534.5h1.1M249 534.5h1.1M274 534.5h1.1M299 534.5h1.1M323 534.5h1.1M348 534.5h1.1M373 534.5h1.1M398 534.5h1.1M422 534.5h1.1M447 534.5h1.1M472 534.5h1.1M496 534.5h1.1M521 534.5h1.1M546 534.5h1.1M571 534.5h1.1M595 534.5h1.1M620 534.5h1.1M645 534.5h1.1M669 534.5h1.1M694 534.5h1.1M719 534.5h1.1M743 534.5h1.1M768 534.5h1.1M793 534.5h1.1M818 534.5h1.1M842 534.5h1.1M867 534.5h1.1M892 534.5h1.1M916 534.5h1.1M941 534.5h1.1M966 534.5h1.1M991 534.5h1.1M1015 534.5h1.1M1040 534.5h1.1M1065 534.5h1.1M1089 534.5h1.1M1114 534.5h1.1M1139 534.5h1.1M1164 534.5h1.1M1188 534.5h1.1M1213 534.5h1.1M1238 534.5h1.1M1262 534.5h1.1M1287 534.5h1.1M1312 534.5h1.1M1336 534.5h1.1M1361 534.5h1.1M1386 534.5h1.1M1411 534.5h1.1M323 167.5h1.1M323 177.5h1.1M323 188.5h1.1M323 199.5h1.1M323 210.5h1.1M323 221.5h1.1M323 231.5h1.1M323 242.5h1.1M323 253.5h1.1M323 264.5h1.1M323 275.5h1.1M323 285.5h1.1M323 296.5h1.1M323 307.5h1.1M323 318.5h1.1M323 329.5h1.1M323 339.5h1.1M323 350.5h1.1M323 361.5h1.1M323 372.5h1.1M323 383.5h1.1M323 393.5h1.1M323 404.5h1.1M323 415.5h1.1M323 426.5h1.1M323 437.5h1.1M323 447.5h1.1M323 458.5h1.1M323 469.5h1.1M323 480.5h1.1M323 491.5h1.1M323 501.5h1.1M323 512.5h1.1M323 523.5h1.1M323 534.5h1.1M323 545.5h1.1M323 555.5h1.1M323 566.5h1.1M323 577.5h1.1M447 167.5h1.1M447 177.5h1.1M447 188.5h1.1M447 199.5h1.1M447 210.5h1.1M447 221.5h1.1M447 231.5h1.1M447 242.5h1.1M447 253.5h1.1M447 264.5h1.1M447 275.5h1.1M447 285.5h1.1M447 296.5h1.1M447 307.5h1.1M447 318.5h1.1M447 329.5h1.1M447 339.5h1.1M447 350.5h1.1M447 361.5h1.1M447 372.5h1.1M447 383.5h1.1M447 393.5h1.1M447 404.5h1.1M447 415.5h1.1M447 426.5h1.1M447 437.5h1.1M447 447.5h1.1M447 458.5h1.1M447 469.5h1.1M447 480.5h1.1M447 491.5h1.1M447 501.5h1.1M447 512.5h1.1M447 523.5h1.1M447 534.5h1.1M447 545.5h1.1M447 555.5h1.1M447 566.5h1.1M447 577.5h1.1M571 167.5h1.1M571 177.5h1.1M571 188.5h1.1M571 199.5h1.1M571 210.5h1.1M571 221.5h1.1M571 231.5h1.1M571 242.5h1.1M571 253.5h1.1M571 264.5h1.1M571 275.5h1.1M571 285.5h1.1M571 296.5h1.1M571 307.5h1.1M571 318.5h1.1M571 329.5h1.1M571 339.5h1.1M571 350.5h1.1M571 361.5h1.1M571 372.5h1.1M571 383.5h1.1M571 393.5h1.1M571 404.5h1.1M571 415.5h1.1M571 426.5h1.1M571 437.5h1.1M571 447.5h1.1M571 458.5h1.1M571 469.5h1.1M571 480.5h1.1M571 491.5h1.1M571 501.5h1.1M571 512.5h1.1M571 523.5h1.1M571 534.5h1.1M571 545.5h1.1M571 555.5h1.1M571 566.5h1.1M571 577.5h1.1M694 167.5h1.1M694 177.5h1.1M694 188.5h1.1M694 199.5h1.1M694 210.5h1.1M694 221.5h1.1M694 231.5h1.1M694 242.5h1.1M694 253.5h1.1M694 264.5h1.1M694 275.5h1.1M694 285.5h1.1M694 296.5h1.1M694 307.5h1.1M694 318.5h1.1M694 329.5h1.1M694 339.5h1.1M694 350.5h1.1M694 361.5h1.1M694 372.5h1.1M694 383.5h1.1M694 393.5h1.1M694 404.5h1.1M694 415.5h1.1M694 426.5h1.1M694 437.5h1.1M694 447.5h1.1M694 458.5h1.1M694 469.5h1.1M694 480.5h1.1M694 491.5h1.1M694 501.5h1.1M694 512.5h1.1M694 523.5h1.1M694 534.5h1.1M694 545.5h1.1M694 555.5h1.1M694 566.5h1.1M694 577.5h1.1M818 167.5h1.1M818 177.5h1.1M818 188.5h1.1M818 199.5h1.1M818 210.5h1.1M818 221.5h1.1M818 231.5h1.1M818 242.5h1.1M818 253.5h1.1M818 264.5h1.1M818 275.5h1.1M818 285.5h1.1M818 296.5h1.1M818 307.5h1.1M818 318.5h1.1M818 329.5h1.1M818 339.5h1.1M818 350.5h1.1M818 361.5h1.1M818 372.5h1.1M818 383.5h1.1M818 393.5h1.1M818 404.5h1.1M818 415.5h1.1M818 426.5h1.1M818 437.5h1.1M818 447.5h1.1M818 458.5h1.1M818 469.5h1.1M818 480.5h1.1M818 491.5h1.1M818 501.5h1.1M818 512.5h1.1M818 523.5h1.1M818 534.5h1.1M818 545.5h1.1M818 555.5h1.1M818 566.5h1.1M818 577.5h1.1M941 167.5h1.1M941 177.5h1.1M941 188.5h1.1M941 199.5h1.1M941 210.5h1.1M941 221.5h1.1M941 231.5h1.1M941 242.5h1.1M941 253.5h1.1M941 264.5h1.1M941 275.5h1.1M941 285.5h1.1M941 296.5h1.1M941 307.5h1.1M941 318.5h1.1M941 329.5h1.1M941 339.5h1.1M941 350.5h1.1M941 361.5h1.1M941 372.5h1.1M941 383.5h1.1M941 393.5h1.1M941 404.5h1.1M941 415.5h1.1M941 426.5h1.1M941 437.5h1.1M941 447.5h1.1M941 458.5h1.1M941 469.5h1.1M941 480.5h1.1M941 491.5h1.1M941 501.5h1.1M941 512.5h1.1M941 523.5h1.1M941 534.5h1.1M941 545.5h1.1M941 555.5h1.1M941 566.5h1.1M941 577.5h1.1M1065 167.5h1.1M1065 177.5h1.1M1065 188.5h1.1M1065 199.5h1.1M1065 210.5h1.1M1065 221.5h1.1M1065 231.5h1.1M1065 242.5h1.1M1065 253.5h1.1M1065 264.5h1.1M1065 275.5h1.1M1065 285.5h1.1M1065 296.5h1.1M1065 307.5h1.1M1065 318.5h1.1M1065 329.5h1.1M1065 339.5h1.1M1065 350.5h1.1M1065 361.5h1.1M1065 372.5h1.1M1065 383.5h1.1M1065 393.5h1.1M1065 404.5h1.1M1065 415.5h1.1M1065 426.5h1.1M1065 437.5h1.1M1065 447.5h1.1M1065 458.5h1.1M1065 469.5h1.1M1065 480.5h1.1M1065 491.5h1.1M1065 501.5h1.1M1065 512.5h1.1M1065 523.5h1.1M1065 534.5h1.1M1065 545.5h1.1M1065 555.5h1.1M1065 566.5h1.1M1065 577.5h1.1M1188 167.5h1.1M1188 177.5h1.1M1188 188.5h1.1M1188 199.5h1.1M1188 210.5h1.1M1188 221.5h1.1M1188 231.5h1.1M1188 242.5h1.1M1188 253.5h1.1M1188 264.5h1.1M1188 275.5h1.1M1188 285.5h1.1M1188 296.5h1.1M1188 307.5h1.1M1188 318.5h1.1M1188 329.5h1.1M1188 339.5h1.1M1188 350.5h1.1M1188 361.5h1.1M1188 372.5h1.1M1188 383.5h1.1M1188 393.5h1.1M1188 404.5h1.1M1188 415.5h1.1M1188 426.5h1.1M1188 437.5h1.1M1188 447.5h1.1M1188 458.5h1.1M1188 469.5h1.1M1188 480.5h1.1M1188 491.5h1.1M1188 501.5h1.1M1188 512.5h1.1M1188 523.5h1.1M1188 534.5h1.1M1188 545.5h1.1M1188 555.5h1.1M1188 566.5h1.1M1188 577.5h1.1M1312 167.5h1.1M1312 177.5h1.1M1312 188.5h1.1M1312 199.5h1.1M1312 210.5h1.1M1312 221.5h1.1M1312 231.5h1.1M1312 242.5h1.1M1312 253.5h1.1M1312 264.5h1.1M1312 275.5h1.1M1312 285.5h1.1M1312 296.5h1.1M1312 307.5h1.1M1312 318.5h1.1M1312 329.5h1.1M1312 339.5h1.1M1312 350.5h1.1M1312 361.5h1.1M1312 372.5h1.1M1312 383.5h1.1M1312 393.5h1.1M1312 404.5h1.1M1312 415.5h1.1M1312 426.5h1.1M1312 437.5h1.1M1312 447.5h1.1M1312 458.5h1.1M1312 469.5h1.1M1312 480.5h1.1M1312 491.5h1.1M1312 501.5h1.1M1312 512.5h1.1M1312 523.5h1.1M1312 534.5h1.1M1312 545.5h1.1M1312 555.5h1.1M1312 566.5h1.1M1312 577.5h1.1" stroke="#cfcfcf" stroke-width="1.1" fill="none" shape-rendering="auto"/>
<path d="M200.4 372.3H1435.8M818.1 156.3V586.5" stroke="#dedede" stroke-width="1.15" fill="none" shape-rendering="auto"/>
<path d="M225.1 368.0v8.6M225.1 157v2.6M225.1 585.5v-2.6M249.8 368.0v8.6M249.8 157v2.6M249.8 585.5v-2.6M274.5 368.0v8.6M274.5 157v2.6M274.5 585.5v-2.6M299.2 368.0v8.6M299.2 157v2.6M299.2 585.5v-2.6M323.9 368.0v8.6M323.9 157v3.6M323.9 585.5v-3.6M348.6 368.0v8.6M348.6 157v2.6M348.6 585.5v-2.6M373.4 368.0v8.6M373.4 157v2.6M373.4 585.5v-2.6M398.1 368.0v8.6M398.1 157v2.6M398.1 585.5v-2.6M422.8 368.0v8.6M422.8 157v2.6M422.8 585.5v-2.6M447.5 368.0v8.6M447.5 157v3.6M447.5 585.5v-3.6M472.2 368.0v8.6M472.2 157v2.6M472.2 585.5v-2.6M496.9 368.0v8.6M496.9 157v2.6M496.9 585.5v-2.6M521.6 368.0v8.6M521.6 157v2.6M521.6 585.5v-2.6M546.3 368.0v8.6M546.3 157v2.6M546.3 585.5v-2.6M571.0 368.0v8.6M571.0 157v3.6M571.0 585.5v-3.6M595.7 368.0v8.6M595.7 157v2.6M595.7 585.5v-2.6M620.4 368.0v8.6M620.4 157v2.6M620.4 585.5v-2.6M645.1 368.0v8.6M645.1 157v2.6M645.1 585.5v-2.6M669.9 368.0v8.6M669.9 157v2.6M669.9 585.5v-2.6M694.6 368.0v8.6M694.6 157v3.6M694.6 585.5v-3.6M719.3 368.0v8.6M719.3 157v2.6M719.3 585.5v-2.6M744.0 368.0v8.6M744.0 157v2.6M744.0 585.5v-2.6M768.7 368.0v8.6M768.7 157v2.6M768.7 585.5v-2.6M793.4 368.0v8.6M793.4 157v2.6M793.4 585.5v-2.6M818.1 368.0v8.6M818.1 157v3.6M818.1 585.5v-3.6M842.8 368.0v8.6M842.8 157v2.6M842.8 585.5v-2.6M867.5 368.0v8.6M867.5 157v2.6M867.5 585.5v-2.6M892.2 368.0v8.6M892.2 157v2.6M892.2 585.5v-2.6M916.9 368.0v8.6M916.9 157v2.6M916.9 585.5v-2.6M941.6 368.0v8.6M941.6 157v3.6M941.6 585.5v-3.6M966.3 368.0v8.6M966.3 157v2.6M966.3 585.5v-2.6M991.1 368.0v8.6M991.1 157v2.6M991.1 585.5v-2.6M1015.8 368.0v8.6M1015.8 157v2.6M1015.8 585.5v-2.6M1040.5 368.0v8.6M1040.5 157v2.6M1040.5 585.5v-2.6M1065.2 368.0v8.6M1065.2 157v3.6M1065.2 585.5v-3.6M1089.9 368.0v8.6M1089.9 157v2.6M1089.9 585.5v-2.6M1114.6 368.0v8.6M1114.6 157v2.6M1114.6 585.5v-2.6M1139.3 368.0v8.6M1139.3 157v2.6M1139.3 585.5v-2.6M1164.0 368.0v8.6M1164.0 157v2.6M1164.0 585.5v-2.6M1188.7 368.0v8.6M1188.7 157v3.6M1188.7 585.5v-3.6M1213.4 368.0v8.6M1213.4 157v2.6M1213.4 585.5v-2.6M1238.1 368.0v8.6M1238.1 157v2.6M1238.1 585.5v-2.6M1262.8 368.0v8.6M1262.8 157v2.6M1262.8 585.5v-2.6M1287.6 368.0v8.6M1287.6 157v2.6M1287.6 585.5v-2.6M1312.3 368.0v8.6M1312.3 157v3.6M1312.3 585.5v-3.6M1337.0 368.0v8.6M1337.0 157v2.6M1337.0 585.5v-2.6M1361.7 368.0v8.6M1361.7 157v2.6M1361.7 585.5v-2.6M1386.4 368.0v8.6M1386.4 157v2.6M1386.4 585.5v-2.6M1411.1 368.0v8.6M1411.1 157v2.6M1411.1 585.5v-2.6M813.8 167.1h8.6M201.5 167.1h2.6M1434.5 167.1h-2.6M813.8 177.9h8.6M201.5 177.9h2.6M1434.5 177.9h-2.6M813.8 188.7h8.6M201.5 188.7h2.6M1434.5 188.7h-2.6M813.8 199.5h8.6M201.5 199.5h2.6M1434.5 199.5h-2.6M813.8 210.3h8.6M201.5 210.3h3.6M1434.5 210.3h-3.6M813.8 221.1h8.6M201.5 221.1h2.6M1434.5 221.1h-2.6M813.8 231.9h8.6M201.5 231.9h2.6M1434.5 231.9h-2.6M813.8 242.7h8.6M201.5 242.7h2.6M1434.5 242.7h-2.6M813.8 253.5h8.6M201.5 253.5h2.6M1434.5 253.5h-2.6M813.8 264.3h8.6M201.5 264.3h3.6M1434.5 264.3h-3.6M813.8 275.1h8.6M201.5 275.1h2.6M1434.5 275.1h-2.6M813.8 285.9h8.6M201.5 285.9h2.6M1434.5 285.9h-2.6M813.8 296.7h8.6M201.5 296.7h2.6M1434.5 296.7h-2.6M813.8 307.5h8.6M201.5 307.5h2.6M1434.5 307.5h-2.6M813.8 318.3h8.6M201.5 318.3h3.6M1434.5 318.3h-3.6M813.8 329.1h8.6M201.5 329.1h2.6M1434.5 329.1h-2.6M813.8 339.9h8.6M201.5 339.9h2.6M1434.5 339.9h-2.6M813.8 350.7h8.6M201.5 350.7h2.6M1434.5 350.7h-2.6M813.8 361.5h8.6M201.5 361.5h2.6M1434.5 361.5h-2.6M813.8 372.3h8.6M201.5 372.3h3.6M1434.5 372.3h-3.6M813.8 383.1h8.6M201.5 383.1h2.6M1434.5 383.1h-2.6M813.8 393.9h8.6M201.5 393.9h2.6M1434.5 393.9h-2.6M813.8 404.7h8.6M201.5 404.7h2.6M1434.5 404.7h-2.6M813.8 415.5h8.6M201.5 415.5h2.6M1434.5 415.5h-2.6M813.8 426.3h8.6M201.5 426.3h3.6M1434.5 426.3h-3.6M813.8 437.1h8.6M201.5 437.1h2.6M1434.5 437.1h-2.6M813.8 447.9h8.6M201.5 447.9h2.6M1434.5 447.9h-2.6M813.8 458.7h8.6M201.5 458.7h2.6M1434.5 458.7h-2.6M813.8 469.5h8.6M201.5 469.5h2.6M1434.5 469.5h-2.6M813.8 480.3h8.6M201.5 480.3h3.6M1434.5 480.3h-3.6M813.8 491.1h8.6M201.5 491.1h2.6M1434.5 491.1h-2.6M813.8 501.9h8.6M201.5 501.9h2.6M1434.5 501.9h-2.6M813.8 512.7h8.6M201.5 512.7h2.6M1434.5 512.7h-2.6M813.8 523.5h8.6M201.5 523.5h2.6M1434.5 523.5h-2.6M813.8 534.3h8.6M201.5 534.3h3.6M1434.5 534.3h-3.6M813.8 545.1h8.6M201.5 545.1h2.6M1434.5 545.1h-2.6M813.8 555.9h8.6M201.5 555.9h2.6M1434.5 555.9h-2.6M813.8 566.7h8.6M201.5 566.7h2.6M1434.5 566.7h-2.6M813.8 577.5h8.6M201.5 577.5h2.6M1434.5 577.5h-2.6" stroke="#e2e2e2" stroke-width="1.05" fill="none" shape-rendering="auto"/>
<path d="M201.5 518.0H205.0V512.6H205.2V518.0H208.2V512.6H212.6V507.2H212.9V512.6H213.1V507.2H213.4V512.6H213.6V507.2H214.1V512.6H214.6V507.2H217.1V501.8H217.6V507.2H217.8V501.8H220.3V496.4H220.5V501.8H220.8V496.4H222.3V491.0H222.5V496.4H222.8V491.0H223.5V496.4H223.7V491.0H225.5V485.6H226.2V491.0H226.5V485.6H227.7V480.2H227.9V485.6H228.2V480.2H230.4V474.8H232.4V469.4H234.6V464.0H236.3V458.6H237.6V453.2H240.0V447.8H241.3V442.4H243.3V437.0H244.5V431.6H244.7V437.0H245.0V431.6H246.2V426.2H246.7V420.8H247.0V426.2H247.7V420.8H249.4V415.4H250.4V410.0H250.7V415.4H250.9V410.0H252.6V404.6H253.4V399.2H254.6V393.8H256.6V388.4H257.6V383.0H259.6V377.6H261.1V372.2H262.0V366.8H263.5V361.4H263.8V366.8H264.0V361.4H265.0V356.0H266.5V350.6H266.7V356.0H267.0V350.6H268.5V345.2H268.7V339.8H269.0V345.2H269.5V339.8H270.9V334.4H272.4V329.0H272.7V334.4H272.9V329.0H274.1V323.6H274.9V318.2H275.1V323.6H275.6V318.2H276.9V312.8H278.6V307.4H278.8V312.8H279.1V307.4H280.1V302.0H281.6V296.6H283.0V291.2H284.8V285.8H286.7V280.4H288.7V275.0H290.5V269.6H291.9V264.2H293.9V258.8H296.1V253.4H296.6V258.8H296.9V253.4H298.4V248.0H299.1V253.4H299.4V248.0H300.6V242.6H300.8V248.0H301.3V242.6H303.6V237.2H304.0V242.6H304.3V237.2H307.0V231.8H308.7V237.2H309.0V231.8H311.0V226.4H316.6V221.0H318.4V226.4H318.6V221.0H318.9V226.4H319.1V221.0H319.4V226.4H319.6V221.0H330.0V226.4H330.2V221.0H331.7V226.4H332.0V221.0H332.5V226.4H333.5V221.0H333.7V226.4H336.9V231.8H337.2V226.4H337.4V231.8H337.7V226.4H337.9V231.8H341.1V237.2H341.4V231.8H341.6V237.2H342.3V231.8H342.6V237.2H344.1V242.6H346.5V248.0H346.8V242.6H347.3V248.0H348.5V253.4H348.8V248.0H349.3V253.4H350.0V248.0H350.3V253.4H351.5V258.8H353.2V264.2H353.5V258.8H354.0V264.2H355.4V269.6H357.7V275.0H358.2V269.6H358.4V275.0H359.6V280.4H360.9V285.8H361.6V280.4H361.9V285.8H363.4V291.2H364.6V296.6H365.3V291.2H365.6V296.6H366.8V302.0H368.0V307.4H369.3V312.8H369.8V307.4H370.0V312.8H371.3V318.2H373.0V323.6H374.5V329.0H376.0V334.4H376.9V339.8H377.4V334.4H377.7V339.8H378.9V345.2H379.2V350.6H379.4V345.2H379.7V350.6H380.2V345.2H380.4V350.6H381.6V356.0H383.1V361.4H384.4V366.8H385.8V372.2H387.1V377.6H388.8V383.0H389.8V388.4H391.8V393.8H393.0V399.2H394.5V404.6H395.7V410.0H396.7V415.4H397.2V410.0H397.5V415.4H398.7V420.8H398.9V415.4H399.2V420.8H399.7V415.4H399.9V420.8H400.7V426.2H401.9V431.6H403.6V437.0H405.4V442.4H406.6V447.8H407.8V453.2H408.8V447.8H409.1V453.2H409.3V458.6H409.6V453.2H410.1V458.6H410.3V453.2H410.5V458.6H412.0V464.0H413.8V469.4H415.7V474.8H417.5V480.2H417.7V474.8H418.2V480.2H419.7V485.6H419.9V480.2H420.2V485.6H420.4V480.2H420.7V485.6H420.9V480.2H421.2V485.6H421.7V491.0H422.2V485.6H422.7V491.0H422.9V485.6H423.1V491.0H423.9V496.4H424.1V491.0H424.4V496.4H424.6V491.0H425.1V496.4H427.1V501.8H430.8V507.2H431.1V501.8H431.3V507.2H434.0V512.6H434.5V507.2H435.5V512.6H435.8V507.2H436.0V512.6H438.7V518.0H439.0V512.6H440.0V518.0H440.2V512.6H440.4V518.0H441.7V512.6H441.9V518.0H442.7V512.6H442.9V518.0H443.7V512.6H443.9V518.0H453.8V512.6H454.0V518.0H454.5V512.6H455.0V518.0H455.3V512.6H455.8V518.0H456.0V512.6H461.0V507.2H464.9V501.8H467.1V496.4H467.9V501.8H468.1V496.4H470.1V491.0H473.3V485.6H475.3V480.2H476.5V474.8H476.8V480.2H477.3V474.8H479.0V469.4H479.5V474.8H479.7V469.4H481.2V464.0H481.5V469.4H481.7V464.0H482.9V458.6H484.4V453.2H484.9V458.6H485.2V453.2H486.7V447.8H488.1V442.4H488.4V447.8H488.9V442.4H489.4V437.0H489.6V442.4H490.1V437.0H491.3V431.6H491.8V437.0H492.1V431.6H493.3V426.2H494.3V420.8H495.8V415.4H496.0V420.8H496.5V415.4H497.3V410.0H497.5V415.4H497.8V410.0H499.7V404.6H500.2V399.2H502.0V393.8H502.5V399.2H502.7V393.8H503.7V388.4H504.7V383.0H504.9V388.4H505.2V383.0H506.2V377.6H506.4V383.0H506.7V377.6H507.7V372.2H508.6V366.8H508.9V372.2H509.1V366.8H510.1V361.4H510.4V366.8H510.6V361.4H512.1V356.0H514.1V350.6H514.8V345.2H516.3V339.8H516.6V345.2H516.8V339.8H517.8V334.4H518.0V339.8H518.3V334.4H519.3V329.0H519.5V334.4H519.8V329.0H520.8V323.6H522.7V318.2H524.2V312.8H525.2V307.4H525.4V312.8H525.7V307.4H526.9V302.0H528.4V296.6H528.7V302.0H528.9V296.6H530.1V291.2H532.4V285.8H533.6V280.4H535.8V275.0H538.1V269.6H538.5V264.2H538.8V269.6H539.5V264.2H541.0V258.8H541.3V264.2H541.5V258.8H541.8V264.2H542.0V258.8H542.5V253.4H542.7V258.8H543.2V253.4H544.0V258.8H544.2V253.4H546.0V248.0H548.2V242.6H548.7V248.0H548.9V242.6H550.9V237.2H551.1V242.6H551.4V237.2H553.4V231.8H553.6V237.2H554.1V231.8H557.3V226.4H558.1V231.8H558.6V226.4H559.1V231.8H559.3V226.4H562.3V221.0H563.0V226.4H563.5V221.0H563.7V226.4H564.7V221.0H565.5V226.4H566.0V221.0H567.9V226.4H568.2V221.0H573.4V226.4H573.6V221.0H575.4V226.4H575.6V221.0H578.8V226.4H579.6V221.0H579.8V226.4H582.5V231.8H582.8V226.4H583.0V231.8H583.3V226.4H583.8V231.8H584.0V226.4H584.3V231.8H584.5V226.4H584.8V231.8H588.0V237.2H589.9V242.6H590.2V237.2H591.2V242.6H591.7V237.2H591.9V242.6H594.1V248.0H596.1V253.4H596.6V248.0H596.9V253.4H598.1V258.8H600.8V264.2H602.3V269.6H602.5V264.2H602.8V269.6H605.0V275.0H606.2V280.4H606.7V275.0H607.0V280.4H608.2V285.8H609.0V280.4H609.2V285.8H610.0V291.2H611.9V296.6H613.2V302.0H615.1V307.4H616.4V312.8H616.6V307.4H616.9V312.8H618.1V318.2H619.8V323.6H621.3V329.0H622.8V334.4H624.5V339.8H625.5V345.2H625.8V339.8H626.0V345.2H627.3V350.6H628.5V356.0H629.5V361.4H629.7V356.0H630.0V361.4H631.5V366.8H632.4V372.2H632.7V366.8H633.2V372.2H634.2V377.6H635.4V383.0H637.4V388.4H638.4V393.8H639.9V399.2H641.6V404.6H642.6V410.0H642.8V404.6H643.3V410.0H644.3V415.4H645.8V420.8H647.8V426.2H649.2V431.6H650.5V437.0H652.5V442.4H653.4V447.8H653.9V442.4H654.2V447.8H655.9V453.2H656.9V458.6H659.1V464.0H660.4V469.4H660.9V464.0H661.1V469.4H662.8V474.8H664.1V469.4H664.3V474.8H665.3V480.2H667.0V485.6H669.3V491.0H672.0V496.4H674.0V501.8H674.2V496.4H674.4V501.8H677.4V507.2H677.9V501.8H678.2V507.2H681.4V512.6H682.1V507.2H682.6V512.6H684.8V518.0H685.1V512.6H685.8V518.0H686.1V512.6H686.3V518.0H686.8V512.6H688.0V518.0H701.1V512.6H701.4V518.0H701.9V512.6H702.6V518.0H703.1V512.6H706.6V507.2H706.8V512.6H707.3V507.2H710.3V501.8H710.8V507.2H711.3V501.8H714.2V496.4H714.5V501.8H714.7V496.4H715.0V501.8H715.2V496.4H716.7V491.0H717.0V496.4H717.4V491.0H717.7V496.4H717.9V491.0H719.7V485.6H721.4V480.2H721.6V485.6H722.6V480.2H723.1V474.8H723.4V480.2H723.9V474.8H724.1V480.2H724.4V474.8H724.9V480.2H725.1V474.8H726.6V469.4H728.1V464.0H729.8V458.6H730.0V464.0H730.5V458.6H732.0V453.2H732.3V458.6H732.5V453.2H733.5V447.8H735.5V442.4H736.7V437.0H738.7V431.6H740.2V426.2H741.4V420.8H741.7V426.2H741.9V420.8H742.6V415.4H742.9V420.8H743.1V415.4H743.4V420.8H743.6V415.4H744.4V410.0H746.1V404.6H746.4V410.0H746.6V404.6H747.8V399.2H749.3V393.8H750.6V388.4H752.3V383.0H753.5V377.6H755.3V372.2H756.2V366.8H758.0V361.4H759.5V356.0H759.7V361.4H759.9V356.0H760.9V350.6H761.9V345.2H763.4V339.8H765.1V334.4H766.1V329.0H766.9V334.4H767.4V329.0H767.9V323.6H769.3V318.2H771.3V312.8H772.3V307.4H773.8V302.0H775.8V296.6H776.0V302.0H776.3V296.6H777.2V291.2H777.5V296.6H777.7V291.2H779.2V285.8H779.5V291.2H779.7V285.8H780.7V280.4H780.9V285.8H781.2V280.4H782.4V275.0H782.7V280.4H782.9V275.0H784.7V269.6H784.9V275.0H785.2V269.6H786.4V264.2H786.6V269.6H786.9V264.2H788.4V258.8H788.6V264.2H788.9V258.8H790.3V253.4H790.6V258.8H790.8V253.4H793.1V248.0H795.0V242.6H795.3V248.0H795.5V242.6H798.0V237.2H798.2V242.6H798.7V237.2H799.7V231.8H800.0V237.2H800.5V231.8H801.0V237.2H801.2V231.8H803.7V226.4H804.2V231.8H805.2V226.4H805.4V231.8H805.9V226.4H808.6V221.0H808.9V226.4H809.4V221.0H809.9V226.4H810.6V221.0H811.3V226.4H811.6V221.0H812.3V226.4H812.6V221.0H812.8V226.4H813.1V221.0H823.7V226.4H823.9V221.0H824.7V226.4H825.2V221.0H825.4V226.4H825.9V221.0H826.2V226.4H826.7V221.0H827.2V226.4H831.1V231.8H834.6V237.2H836.1V231.8H836.3V237.2H837.8V242.6H838.0V237.2H838.3V242.6H840.3V248.0H840.5V242.6H841.0V248.0H843.0V253.4H843.5V248.0H843.7V253.4H844.9V258.8H845.2V253.4H846.2V258.8H847.9V264.2H849.4V269.6H849.9V264.2H850.4V269.6H852.4V275.0H854.1V280.4H855.1V285.8H855.3V280.4H855.8V285.8H857.3V291.2H859.0V296.6H861.0V302.0H862.2V307.4H863.2V312.8H863.5V307.4H863.7V312.8H865.5V318.2H866.7V323.6H868.2V329.0H870.2V334.4H870.9V339.8H872.9V345.2H873.6V350.6H873.9V345.2H874.4V350.6H875.8V356.0H877.3V361.4H878.1V366.8H878.3V361.4H878.6V366.8H879.8V372.2H881.5V377.6H883.0V383.0H884.0V388.4H886.0V393.8H886.5V399.2H886.7V393.8H887.0V399.2H887.4V393.8H887.7V399.2H888.4V404.6H889.7V410.0H891.4V415.4H892.9V420.8H894.6V426.2H896.6V431.6H897.3V437.0H898.8V442.4H899.1V437.0H899.3V442.4H900.5V447.8H900.8V442.4H901.0V447.8H902.8V453.2H904.3V458.6H904.5V453.2H904.7V458.6H906.0V464.0H906.2V458.6H906.5V464.0H907.7V469.4H908.0V464.0H908.5V469.4H909.2V474.8H909.4V469.4H909.7V474.8H909.9V469.4H910.4V474.8H911.7V480.2H912.2V474.8H912.9V480.2H913.9V485.6H916.4V491.0H916.9V485.6H917.1V491.0H918.6V496.4H919.1V491.0H919.6V496.4H921.5V501.8H925.0V507.2H926.0V501.8H926.2V507.2H928.0V512.6H928.2V507.2H928.5V512.6H932.4V518.0H932.7V512.6H933.2V518.0H933.9V512.6H934.6V518.0H947.5V512.6H947.7V518.0H948.7V512.6H949.2V518.0H949.5V512.6H949.7V518.0H950.0V512.6H954.7V507.2H955.2V512.6H955.6V507.2H957.9V501.8H958.1V507.2H958.4V501.8H958.9V507.2H959.4V501.8H961.3V496.4H964.8V491.0H965.8V485.6H966.0V491.0H967.3V485.6H969.0V480.2H971.7V474.8H972.7V469.4H972.9V474.8H973.2V469.4H973.4V474.8H973.7V469.4H975.2V464.0H975.9V469.4H976.2V464.0H976.9V458.6H977.1V464.0H977.4V458.6H978.6V453.2H978.9V458.6H979.6V453.2H980.6V447.8H982.1V442.4H984.3V437.0H986.3V431.6H987.0V426.2H988.8V420.8H989.3V426.2H989.5V420.8H990.2V415.4H992.0V410.0H993.2V404.6H993.5V410.0H993.7V404.6H994.7V399.2H996.4V393.8H997.4V388.4H998.9V383.0H1000.1V377.6H1000.4V383.0H1000.6V377.6H1002.1V372.2H1003.3V366.8H1004.8V361.4H1006.1V356.0H1006.3V361.4H1006.6V356.0H1007.8V350.6H1009.3V345.2H1011.0V339.8H1012.0V334.4H1012.2V339.8H1012.5V334.4H1013.0V329.0H1013.2V334.4H1013.5V329.0H1015.2V323.6H1016.4V318.2H1016.7V323.6H1016.9V318.2H1018.2V312.8H1019.4V307.4H1019.6V312.8H1019.9V307.4H1021.1V302.0H1022.6V296.6H1024.3V291.2H1025.3V285.8H1025.6V291.2H1026.1V285.8H1026.3V291.2H1026.6V285.8H1027.8V280.4H1028.3V285.8H1028.5V280.4H1029.3V275.0H1029.5V280.4H1029.8V275.0H1031.8V269.6H1032.0V275.0H1032.3V269.6H1033.5V264.2H1035.5V258.8H1036.9V253.4H1037.2V258.8H1037.7V253.4H1039.2V248.0H1039.4V253.4H1039.9V248.0H1042.4V242.6H1045.1V237.2H1045.3V242.6H1045.6V237.2H1046.3V242.6H1046.6V237.2H1047.8V231.8H1048.1V237.2H1048.3V231.8H1048.6V237.2H1048.8V231.8H1049.1V237.2H1049.3V231.8H1049.5V237.2H1049.8V231.8H1052.3V226.4H1052.5V231.8H1053.0V226.4H1056.7V221.0H1057.0V226.4H1057.5V221.0H1058.2V226.4H1058.4V221.0H1058.7V226.4H1058.9V221.0H1060.9V226.4H1061.2V221.0H1070.3V226.4H1070.8V221.0H1071.3V226.4H1071.5V221.0H1072.3V226.4H1073.5V221.0H1073.8V226.4H1075.2V221.0H1075.5V226.4H1078.7V231.8H1079.0V226.4H1079.2V231.8H1082.2V237.2H1082.7V231.8H1082.9V237.2H1084.6V242.6H1084.9V237.2H1085.1V242.6H1085.4V237.2H1085.6V242.6H1088.1V248.0H1090.3V253.4H1090.6V248.0H1090.8V253.4H1092.8V258.8H1094.5V264.2H1095.8V258.8H1096.0V264.2H1096.5V269.6H1096.7V264.2H1097.2V269.6H1097.7V264.2H1098.0V269.6H1099.2V275.0H1100.7V280.4H1100.9V275.0H1101.2V280.4H1102.7V285.8H1104.2V291.2H1106.1V296.6H1107.4V302.0H1107.9V296.6H1108.1V302.0H1109.3V307.4H1110.6V312.8H1110.8V307.4H1111.1V312.8H1112.3V318.2H1113.5V323.6H1114.0V318.2H1114.3V323.6H1115.0V329.0H1115.3V323.6H1115.8V329.0H1116.5V334.4H1119.0V339.8H1120.2V345.2H1121.2V350.6H1122.7V356.0H1123.9V361.4H1124.2V356.0H1124.4V361.4H1125.9V366.8H1127.1V372.2H1128.9V377.6H1129.6V383.0H1129.9V377.6H1130.1V383.0H1131.1V388.4H1132.3V393.8H1132.6V388.4H1132.8V393.8H1134.1V399.2H1136.0V404.6H1137.0V410.0H1138.8V415.4H1140.0V420.8H1140.2V415.4H1140.5V420.8H1141.5V426.2H1143.2V431.6H1145.2V437.0H1146.7V442.4H1148.1V447.8H1149.1V453.2H1149.9V447.8H1150.1V453.2H1150.9V458.6H1151.6V453.2H1151.8V458.6H1153.1V464.0H1155.3V469.4H1157.3V474.8H1159.3V480.2H1160.5V485.6H1160.7V480.2H1162.0V485.6H1163.7V491.0H1165.9V496.4H1166.9V491.0H1167.2V496.4H1168.6V501.8H1168.9V496.4H1169.1V501.8H1171.1V507.2H1171.6V501.8H1171.9V507.2H1172.1V501.8H1172.6V507.2H1172.9V501.8H1173.1V507.2H1174.6V512.6H1174.8V507.2H1175.1V512.6H1175.6V507.2H1176.1V512.6H1179.0V518.0H1179.5V512.6H1180.8V518.0H1181.3V512.6H1181.7V518.0H1186.4V512.6H1186.7V518.0H1193.6V512.6H1193.9V518.0H1194.6V512.6H1194.8V518.0H1195.3V512.6H1195.6V518.0H1195.8V512.6H1196.1V518.0H1196.6V512.6H1201.5V507.2H1202.0V512.6H1202.3V507.2H1202.7V512.6H1203.0V507.2H1204.5V501.8H1204.7V507.2H1205.5V501.8H1206.7V507.2H1206.9V501.8H1208.7V496.4H1209.2V501.8H1209.7V496.4H1210.9V491.0H1211.4V496.4H1211.6V491.0H1214.4V485.6H1216.6V480.2H1218.6V474.8H1220.0V469.4H1220.3V474.8H1220.8V469.4H1221.0V474.8H1221.3V469.4H1222.3V464.0H1224.5V458.6H1226.2V453.2H1227.0V447.8H1227.2V453.2H1227.5V447.8H1227.7V453.2H1228.2V447.8H1229.7V442.4H1230.7V437.0H1232.6V431.6H1232.9V437.0H1233.1V431.6H1234.1V426.2H1235.9V420.8H1237.1V415.4H1238.6V410.0H1238.8V415.4H1239.1V410.0H1240.1V404.6H1240.3V410.0H1240.8V404.6H1241.8V399.2H1243.0V393.8H1243.3V399.2H1243.5V393.8H1244.8V388.4H1246.2V383.0H1247.7V377.6H1249.2V372.2H1250.2V366.8H1251.9V361.4H1253.9V356.0H1254.9V350.6H1256.4V345.2H1257.9V339.8H1259.1V334.4H1260.6V329.0H1262.5V323.6H1263.5V318.2H1265.3V312.8H1266.7V307.4H1268.5V302.0H1270.0V296.6H1271.4V291.2H1272.7V285.8H1273.2V291.2H1273.4V285.8H1275.1V280.4H1276.6V275.0H1278.6V269.6H1280.3V264.2H1282.8V258.8H1283.3V264.2H1283.6V258.8H1283.8V253.4H1284.0V258.8H1284.5V253.4H1286.3V248.0H1286.8V253.4H1287.0V248.0H1287.3V253.4H1287.5V248.0H1289.2V242.6H1290.0V248.0H1290.2V242.6H1291.0V237.2H1291.2V242.6H1291.7V237.2H1292.0V242.6H1292.2V237.2H1295.7V231.8H1296.6V237.2H1296.9V231.8H1299.1V226.4H1300.1V231.8H1300.4V226.4H1302.8V221.0H1303.1V226.4H1304.1V221.0H1305.0V226.4H1305.3V221.0H1305.8V226.4H1306.0V221.0H1306.8V226.4H1307.3V221.0H1312.0V226.4H1312.2V221.0H1319.1V226.4H1319.4V221.0H1319.9V226.4H1320.4V221.0H1320.6V226.4H1320.9V221.0H1321.4V226.4H1324.8V231.8H1325.3V226.4H1325.6V231.8H1327.3V226.4H1327.5V231.8H1329.8V237.2H1332.0V242.6H1334.7V248.0H1334.9V242.6H1335.2V248.0H1337.4V253.4H1340.1V258.8H1341.9V264.2H1342.4V258.8H1342.9V264.2H1343.6V269.6H1343.8V264.2H1344.3V269.6H1346.1V275.0H1347.5V280.4H1347.8V275.0H1348.0V280.4H1348.3V275.0H1348.5V280.4H1349.3V285.8H1349.5V280.4H1350.0V285.8H1351.3V291.2H1352.0V285.8H1352.2V291.2H1352.7V296.6H1353.0V291.2H1353.5V296.6H1353.7V291.2H1354.0V296.6H1354.2V302.0H1356.4V307.4H1357.7V312.8H1359.2V318.2H1359.4V312.8H1359.7V318.2H1360.9V323.6H1362.6V329.0H1364.4V334.4H1365.3V339.8H1366.6V345.2H1368.6V350.6H1370.3V356.0H1370.8V361.4H1371.0V356.0H1371.3V361.4H1372.0V366.8H1373.7V372.2H1375.5V377.6H1377.0V383.0H1378.7V388.4H1380.4V399.2H1380.7V393.8H1381.2V399.2H1382.6V404.6H1383.9V410.0H1385.9V415.4H1387.3V420.8H1388.6V426.2H1389.1V420.8H1389.3V426.2H1390.5V431.6H1391.8V437.0H1393.5V442.4H1395.2V447.8H1396.7V453.2H1397.0V447.8H1397.2V453.2H1398.5V458.6H1399.7V464.0H1399.9V458.6H1400.4V464.0H1401.7V469.4H1401.9V464.0H1402.4V469.4H1403.4V474.8H1403.6V469.4H1403.9V474.8H1405.9V480.2H1407.8V485.6H1408.1V480.2H1408.3V485.6H1410.1V491.0H1410.3V485.6H1410.6V491.0H1410.8V485.6H1411.1V491.0H1412.5V496.4H1412.8V491.0H1413.0V496.4H1413.5V491.0H1413.8V496.4H1415.5V501.8H1416.0V496.4H1416.2V501.8H1418.7V507.2H1419.0V501.8H1419.5V507.2H1422.4V512.6H1423.7V507.2H1423.9V512.6H1426.9V518.0H1427.4V512.6H1427.6V518.0H1427.9V512.6H1428.8V518.0H1429.1V512.6H1429.3V518.0H1429.6V512.6H1429.8V518.0H1430.1V512.6H1430.3V518.0H1432.3V512.6H1432.6V518.0H1433.8V512.6H1434.0V518.0H1434.6" stroke="#ffff00" stroke-width="1.0" fill="none" shape-rendering="auto" stroke-linejoin="miter" opacity="0.95"/>
<path d="M201.5 525.1H205.2V519.8H205.5V525.1H205.9V519.8H206.2V525.1H206.9V519.8H207.2V525.1H207.4V519.8H207.7V525.1H207.9V519.8H209.4V514.4H209.7V519.8H211.1V514.4H211.4V519.8H211.6V514.4H212.1V519.8H212.6V514.4H215.8V509.0H219.3V503.7H220.8V498.3H221.0V503.7H222.0V498.3H222.3V503.7H222.5V498.3H225.0V493.0H225.5V498.3H225.7V493.0H227.4V487.6H228.9V482.3H229.2V487.6H229.7V482.3H231.2V476.9H232.9V471.6H233.1V476.9H233.4V471.6H234.6V466.2H236.3V460.9H238.3V455.5H240.0V450.2H240.5V455.5H240.8V450.2H241.5V444.9H241.8V450.2H242.0V444.9H243.0V439.5H243.3V444.9H243.5V439.5H244.7V434.1H246.0V428.8H247.7V423.4H248.9V418.1H249.2V423.4H249.4V418.1H250.4V412.8H252.2V407.4H253.1V402.0H253.4V407.4H253.6V402.0H255.1V396.7H256.9V391.4H257.6V386.0H257.8V391.4H258.1V386.0H258.8V380.6H260.6V375.3H261.8V369.9H262.3V375.3H262.5V369.9H263.8V364.6H265.0V359.2H265.7V353.9H266.0V359.2H266.5V353.9H267.5V348.6H269.0V343.2H270.4V337.9H270.7V343.2H270.9V337.9H271.9V332.5H273.4V327.1H275.1V321.8H275.9V316.4H276.1V321.8H276.4V316.4H276.6V321.8H276.9V316.4H277.9V311.1H278.3V316.4H278.6V311.1H279.8V305.8H280.8V300.4H281.1V305.8H281.3V300.4H282.3V295.1H282.5V300.4H283.0V295.1H284.8V289.7H286.5V284.4H287.5V279.0H290.5V273.6H291.2V268.3H291.4V273.6H291.7V268.3H293.7V262.9H295.4V257.6H295.6V262.9H295.9V257.6H297.6V252.2H297.9V257.6H298.1V252.2H300.3V246.9H301.1V252.2H301.3V246.9H302.8V241.6H303.1V246.9H303.3V241.6H303.8V246.9H304.0V241.6H306.3V236.2H306.5V241.6H306.8V236.2H309.5V230.8H309.7V236.2H310.0V230.8H310.2V236.2H310.5V230.8H311.5V236.2H311.7V230.8H313.2V225.5H313.4V230.8H315.4V225.5H315.7V230.8H315.9V225.5H317.4V230.8H317.6V225.5H327.0V230.8H327.3V225.5H328.5V230.8H329.5V225.5H330.0V230.8H335.2V236.2H335.4V230.8H336.4V236.2H338.9V241.6H339.1V236.2H339.9V241.6H342.6V246.9H343.1V241.6H343.6V246.9H344.1V241.6H344.3V246.9H345.3V252.2H346.3V246.9H346.5V252.2H347.8V257.6H348.5V252.2H348.8V257.6H350.3V262.9H352.0V268.3H352.2V262.9H352.7V268.3H354.7V273.6H356.4V279.0H358.4V284.4H359.9V289.7H360.1V284.4H360.4V289.7H362.1V295.1H363.6V300.4H364.8V305.8H365.3V300.4H365.6V305.8H366.8V311.1H368.5V316.4H369.5V321.8H370.8V327.1H371.3V321.8H371.5V327.1H372.5V332.5H374.0V337.9H376.0V343.2H377.4V348.6H378.4V353.9H378.7V348.6H378.9V353.9H380.2V359.2H381.9V364.6H382.4V369.9H384.1V375.3H385.3V380.6H385.8V375.3H386.1V380.6H386.8V386.0H387.1V380.6H387.3V386.0H388.1V391.4H390.0V396.7H391.3V402.0H392.8V407.4H393.5V412.8H393.7V407.4H394.2V412.8H395.5V418.1H397.5V423.4H398.2V428.8H398.7V423.4H398.9V428.8H400.4V434.1H401.4V439.5H402.6V444.9H402.9V439.5H403.4V444.9H404.6V450.2H406.3V455.5H407.8V460.9H408.1V455.5H408.3V460.9H409.8V466.2H411.5V471.6H413.0V476.9H413.3V471.6H413.8V476.9H415.0V482.3H416.0V476.9H416.2V482.3H417.0V487.6H417.2V482.3H417.7V487.6H419.2V493.0H419.4V487.6H419.7V493.0H421.2V498.3H421.4V493.0H421.7V498.3H421.9V493.0H422.2V498.3H423.4V503.7H423.6V498.3H424.4V503.7H427.1V509.0H427.3V503.7H427.6V509.0H429.1V514.4H429.3V509.0H429.8V514.4H433.3V519.8H434.0V514.4H434.8V519.8H437.2V525.1H437.5V519.8H438.0V525.1H438.2V519.8H438.7V525.1H439.0V519.8H439.2V525.1H439.5V519.8H440.0V525.1H448.1V519.8H448.4V525.1H451.8V519.8H452.1V525.1H453.0V519.8H453.3V525.1H454.3V519.8H454.5V525.1H454.8V519.8H455.3V525.1H455.5V519.8H459.0V514.4H459.2V519.8H459.7V514.4H460.0V519.8H460.2V514.4H463.7V509.0H466.4V503.7H470.1V498.3H471.8V493.0H474.3V487.6H475.8V482.3H476.0V487.6H476.5V482.3H477.8V476.9H480.2V471.6H482.0V466.2H482.2V471.6H482.5V466.2H483.2V460.9H483.4V466.2H483.7V460.9H484.7V455.5H484.9V460.9H485.2V455.5H486.7V450.2H487.1V455.5H487.4V450.2H487.9V444.9H488.1V450.2H488.4V444.9H488.6V450.2H488.9V444.9H490.1V439.5H491.6V434.1H491.8V439.5H492.3V434.1H493.3V428.8H493.6V434.1H493.8V428.8H494.3V423.4H494.6V428.8H495.1V423.4H496.5V418.1H497.5V412.8H497.8V418.1H498.3V412.8H499.3V407.4H500.5V402.0H502.2V396.7H503.7V391.4H504.0V396.7H504.2V391.4H504.9V386.0H506.2V380.6H507.9V375.3H509.1V369.9H509.4V375.3H509.6V369.9H510.4V364.6H512.1V359.2H513.6V353.9H514.6V348.6H515.8V343.2H516.1V348.6H516.3V343.2H517.8V337.9H519.3V332.5H520.8V327.1H522.5V321.8H523.5V316.4H525.0V311.1H525.4V316.4H525.7V311.1H526.7V305.8H527.9V300.4H528.2V305.8H528.4V300.4H529.4V295.1H531.4V289.7H532.6V284.4H535.3V279.0H536.6V273.6H536.8V279.0H537.3V273.6H538.5V268.3H540.5V262.9H540.8V268.3H541.0V262.9H542.5V257.6H543.0V262.9H543.2V257.6H544.7V252.2H545.0V257.6H545.2V252.2H545.5V257.6H545.7V252.2H547.4V246.9H547.7V252.2H547.9V246.9H549.7V241.6H549.9V246.9H550.9V241.6H553.6V236.2H554.1V241.6H554.4V236.2H554.9V241.6H555.1V236.2H556.3V230.8H556.6V236.2H557.6V230.8H558.1V236.2H558.3V230.8H562.5V225.5H562.8V230.8H563.3V225.5H563.5V230.8H563.7V225.5H574.9V230.8H575.1V225.5H577.8V230.8H578.1V225.5H578.3V230.8H579.1V225.5H579.3V230.8H583.0V236.2H585.7V241.6H586.0V236.2H586.7V241.6H587.0V236.2H587.2V241.6H589.9V246.9H591.2V252.2H591.4V246.9H592.4V252.2H595.1V257.6H595.4V252.2H595.6V257.6H597.1V262.9H597.4V257.6H597.6V262.9H599.1V268.3H599.3V262.9H599.6V268.3H601.6V273.6H603.8V279.0H605.3V284.4H605.5V279.0H605.8V284.4H607.2V289.7H608.7V295.1H609.0V289.7H609.2V295.1H610.7V300.4H611.7V305.8H611.9V300.4H612.9V305.8H613.9V311.1H615.4V316.4H616.9V321.8H617.9V327.1H618.1V321.8H618.4V327.1H620.1V332.5H621.6V337.9H622.3V343.2H622.6V337.9H622.8V343.2H623.8V348.6H624.0V343.2H624.3V348.6H625.5V353.9H627.0V359.2H628.0V364.6H628.2V359.2H628.7V364.6H630.0V369.9H631.2V375.3H632.9V380.6H633.7V386.0H633.9V380.6H634.7V386.0H635.4V391.4H635.7V386.0H635.9V391.4H636.9V396.7H638.1V402.0H639.4V407.4H639.6V402.0H639.9V407.4H641.1V412.8H642.3V418.1H644.6V423.4H645.0V428.8H645.3V423.4H645.5V428.8H645.8V423.4H646.0V428.8H647.3V434.1H648.5V439.5H648.8V434.1H649.0V439.5H649.5V444.9H650.0V439.5H650.5V444.9H651.5V450.2H651.7V444.9H652.0V450.2H652.7V455.5H653.0V450.2H653.4V455.5H654.7V460.9H656.4V466.2H657.6V460.9H657.9V466.2H658.1V471.6H658.4V466.2H658.6V471.6H660.4V476.9H662.6V482.3H663.8V487.6H664.1V482.3H664.3V487.6H664.6V482.3H664.8V487.6H665.8V493.0H666.0V487.6H666.8V493.0H668.8V498.3H669.5V493.0H669.8V498.3H670.7V503.7H671.0V498.3H671.2V503.7H674.2V509.0H676.4V514.4H676.7V509.0H677.4V514.4H680.4V519.8H680.9V514.4H681.1V519.8H685.6V525.1H685.8V519.8H686.3V525.1H686.6V519.8H687.3V525.1H687.8V519.8H688.0V525.1H699.7V519.8H699.9V525.1H700.4V519.8H700.6V525.1H700.9V519.8H701.1V525.1H701.4V519.8H704.1V525.1H704.3V519.8H705.8V514.4H706.1V519.8H706.3V514.4H707.1V519.8H707.6V514.4H709.8V509.0H710.5V514.4H711.0V509.0H713.7V503.7H715.7V498.3H716.0V503.7H716.5V498.3H718.4V493.0H719.9V487.6H720.2V493.0H720.9V487.6H721.2V493.0H721.4V487.6H722.9V482.3H723.1V487.6H723.4V482.3H724.6V476.9H724.9V482.3H725.1V476.9H725.6V482.3H726.1V476.9H727.3V471.6H729.6V466.2H730.5V460.9H731.0V466.2H731.3V460.9H732.3V455.5H732.5V460.9H732.8V455.5H733.8V450.2H735.0V444.9H735.2V450.2H735.7V444.9H736.0V450.2H736.2V444.9H737.2V439.5H738.7V434.1H739.9V428.8H740.2V434.1H740.4V428.8H741.7V423.4H741.9V428.8H742.2V423.4H743.9V418.1H744.6V412.8H744.9V418.1H745.1V412.8H746.6V407.4H747.8V402.0H749.3V396.7H749.6V402.0H749.8V396.7H750.6V391.4H751.8V386.0H752.0V391.4H752.3V386.0H753.0V380.6H753.3V386.0H753.8V380.6H754.3V375.3H756.0V369.9H757.5V364.6H758.7V359.2H759.5V364.6H759.7V359.2H759.9V353.9H760.2V359.2H760.7V353.9H761.7V348.6H761.9V353.9H762.2V348.6H763.2V343.2H763.7V348.6H763.9V343.2H764.4V337.9H764.9V343.2H765.1V337.9H765.6V332.5H766.1V337.9H766.4V332.5H767.9V327.1H769.1V321.8H770.3V316.4H771.1V321.8H771.3V316.4H772.1V311.1H773.0V305.8H774.8V300.4H775.0V305.8H775.3V300.4H777.2V295.1H778.5V289.7H778.7V295.1H779.0V289.7H780.0V284.4H780.5V289.7H780.7V284.4H782.2V279.0H783.9V273.6H784.2V279.0H784.4V273.6H786.1V268.3H787.9V262.9H789.8V257.6H792.3V252.2H794.8V246.9H797.0V241.6H797.5V246.9H797.8V241.6H800.2V236.2H800.7V241.6H801.0V236.2H802.7V230.8H802.9V236.2H803.4V230.8H803.7V236.2H804.7V230.8H807.6V225.5H807.9V230.8H809.4V225.5H810.1V230.8H810.6V225.5H810.8V230.8H811.1V225.5H811.8V230.8H812.1V225.5H812.6V230.8H812.8V225.5H813.6V230.8H813.8V225.5H821.0V230.8H821.2V225.5H822.7V230.8H823.2V225.5H824.4V230.8H824.7V225.5H824.9V230.8H825.9V225.5H826.2V230.8H830.1V236.2H830.4V230.8H830.6V236.2H831.1V230.8H831.4V236.2H833.8V241.6H834.1V236.2H834.3V241.6H834.6V236.2H834.8V241.6H836.5V246.9H836.8V241.6H837.0V246.9H837.3V241.6H837.5V246.9H839.8V252.2H840.0V246.9H840.3V252.2H842.0V257.6H842.2V252.2H842.7V257.6H844.5V262.9H846.4V268.3H846.7V262.9H846.9V268.3H848.4V273.6H848.7V268.3H848.9V273.6H850.6V279.0H852.9V284.4H853.6V289.7H853.8V284.4H854.6V289.7H855.8V295.1H857.3V300.4H857.8V295.1H858.0V300.4H859.3V305.8H860.8V311.1H861.0V305.8H861.3V311.1H862.2V316.4H862.5V311.1H862.7V316.4H863.0V311.1H863.2V316.4H863.7V321.8H864.2V316.4H864.5V321.8H865.5V327.1H866.7V332.5H868.9V337.9H869.4V343.2H869.7V337.9H870.2V343.2H870.9V348.6H871.4V343.2H871.6V348.6H872.6V353.9H874.1V359.2H875.3V364.6H875.6V359.2H875.8V364.6H877.1V369.9H878.6V375.3H879.8V380.6H881.0V386.0H883.0V391.4H884.0V396.7H885.5V402.0H886.7V407.4H887.0V402.0H887.2V407.4H888.2V412.8H889.4V418.1H889.7V412.8H890.2V418.1H891.4V423.4H892.9V428.8H894.4V434.1H895.4V439.5H895.6V434.1H895.9V439.5H896.8V444.9H897.1V439.5H897.3V444.9H898.6V450.2H900.3V455.5H901.8V460.9H904.0V466.2H905.5V471.6H907.7V476.9H909.7V482.3H911.4V487.6H913.1V493.0H913.4V487.6H913.6V493.0H915.6V498.3H915.9V493.0H916.1V498.3H917.8V503.7H918.6V498.3H918.8V503.7H921.1V509.0H923.5V514.4H923.8V509.0H924.3V514.4H924.5V509.0H924.8V514.4H927.7V519.8H931.7V525.1H931.9V519.8H932.2V525.1H932.4V519.8H933.2V525.1H933.7V519.8H933.9V525.1H934.4V519.8H934.9V525.1H936.1V519.8H936.4V525.1H937.4V519.8H937.6V525.1H947.7V519.8H948.0V525.1H948.2V519.8H948.5V525.1H948.7V519.8H952.9V514.4H953.2V519.8H953.9V514.4H957.4V509.0H958.1V514.4H958.4V509.0H960.1V503.7H960.3V509.0H960.6V503.7H963.3V498.3H963.8V503.7H964.1V498.3H965.3V493.0H965.5V498.3H965.8V493.0H966.0V498.3H966.5V493.0H968.0V487.6H970.2V482.3H972.0V476.9H974.4V471.6H975.9V466.2H976.7V471.6H977.1V466.2H977.9V460.9H979.4V455.5H981.1V450.2H982.3V444.9H982.6V450.2H983.1V444.9H984.6V439.5H985.5V434.1H987.5V428.8H989.3V423.4H990.5V418.1H990.7V423.4H991.0V418.1H991.7V412.8H992.0V418.1H992.5V412.8H993.5V407.4H994.9V402.0H996.2V396.7H997.4V391.4H999.1V386.0H1000.4V380.6H1002.4V375.3H1003.6V369.9H1004.8V364.6H1006.3V359.2H1007.0V353.9H1007.3V359.2H1007.8V353.9H1008.5V348.6H1009.0V353.9H1009.3V348.6H1010.5V343.2H1012.2V337.9H1013.2V332.5H1015.0V327.1H1016.2V321.8H1017.2V316.4H1018.7V311.1H1018.9V316.4H1019.4V311.1H1020.6V305.8H1021.6V300.4H1021.9V305.8H1022.4V300.4H1024.1V295.1H1025.1V289.7H1025.3V295.1H1026.1V289.7H1027.3V284.4H1027.6V289.7H1027.8V284.4H1029.3V279.0H1031.0V273.6H1031.3V279.0H1031.5V273.6H1033.0V268.3H1035.2V262.9H1036.2V257.6H1036.5V262.9H1036.9V257.6H1038.7V252.2H1038.9V257.6H1039.2V252.2H1039.7V257.6H1040.2V252.2H1041.1V246.9H1041.4V252.2H1041.9V246.9H1042.1V252.2H1042.4V246.9H1044.9V241.6H1047.8V236.2H1050.8V230.8H1051.0V236.2H1051.3V230.8H1052.3V236.2H1052.8V230.8H1054.0V236.2H1054.2V230.8H1055.7V225.5H1056.0V230.8H1056.5V225.5H1056.7V230.8H1057.0V225.5H1057.2V230.8H1057.5V225.5H1069.8V230.8H1070.1V225.5H1071.5V230.8H1071.8V225.5H1072.3V230.8H1072.8V225.5H1073.0V230.8H1075.5V236.2H1075.7V230.8H1076.7V236.2H1077.0V230.8H1077.2V236.2H1077.7V230.8H1078.0V236.2H1080.7V241.6H1080.9V236.2H1081.2V241.6H1083.9V246.9H1084.4V241.6H1084.6V246.9H1084.9V241.6H1085.1V246.9H1086.9V252.2H1087.1V246.9H1087.4V252.2H1088.8V257.6H1089.3V252.2H1089.8V257.6H1091.3V262.9H1092.3V257.6H1092.5V262.9H1092.8V257.6H1093.0V262.9H1093.5V268.3H1093.8V262.9H1094.0V268.3H1096.0V273.6H1098.2V279.0H1099.5V284.4H1101.4V289.7H1103.4V295.1H1104.9V300.4H1106.1V305.8H1107.9V311.1H1109.1V316.4H1110.8V321.8H1112.8V327.1H1114.3V332.5H1115.3V337.9H1115.5V332.5H1115.8V337.9H1117.3V343.2H1118.0V348.6H1120.0V353.9H1121.5V359.2H1122.4V364.6H1122.7V359.2H1122.9V364.6H1123.9V369.9H1125.2V375.3H1126.6V380.6H1128.4V386.0H1129.4V391.4H1130.1V386.0H1130.3V391.4H1130.8V396.7H1132.6V402.0H1132.8V396.7H1133.1V402.0H1134.3V407.4H1135.0V412.8H1135.3V407.4H1135.8V412.8H1136.8V418.1H1138.3V423.4H1139.7V428.8H1141.0V434.1H1142.7V439.5H1143.7V444.9H1143.9V439.5H1144.4V444.9H1145.7V450.2H1146.2V444.9H1146.4V450.2H1147.2V455.5H1147.4V450.2H1147.6V455.5H1148.6V460.9H1148.9V455.5H1149.1V460.9H1151.4V466.2H1153.1V471.6H1154.6V476.9H1156.0V482.3H1156.3V476.9H1156.5V482.3H1158.8V487.6H1160.5V493.0H1162.7V498.3H1163.0V493.0H1163.2V498.3H1165.2V503.7H1166.9V509.0H1167.2V503.7H1167.4V509.0H1167.7V503.7H1167.9V509.0H1171.1V514.4H1172.1V509.0H1172.4V514.4H1175.1V519.8H1175.3V514.4H1175.8V519.8H1176.1V514.4H1176.3V519.8H1179.5V525.1H1180.3V519.8H1180.5V525.1H1180.8V519.8H1181.0V525.1H1182.0V519.8H1182.2V525.1H1183.5V519.8H1183.7V525.1H1190.1V519.8H1190.4V525.1H1192.1V519.8H1192.4V525.1H1193.6V519.8H1193.9V525.1H1194.3V519.8H1194.8V525.1H1195.6V519.8H1200.8V514.4H1203.0V509.0H1203.2V514.4H1204.5V509.0H1207.2V503.7H1207.4V509.0H1208.4V503.7H1208.7V509.0H1208.9V503.7H1210.4V498.3H1212.9V493.0H1213.1V498.3H1213.6V493.0H1215.4V487.6H1217.6V482.3H1219.8V476.9H1221.3V471.6H1223.3V466.2H1225.0V460.9H1226.0V455.5H1226.2V460.9H1226.5V455.5H1228.2V450.2H1228.4V455.5H1228.7V450.2H1229.7V444.9H1231.7V439.5H1233.1V434.1H1234.1V428.8H1236.4V423.4H1237.3V418.1H1239.6V412.8H1240.6V407.4H1242.0V402.0H1242.3V407.4H1242.5V402.0H1243.8V396.7H1244.5V391.4H1245.3V396.7H1245.5V391.4H1246.0V386.0H1247.5V380.6H1249.0V375.3H1249.9V369.9H1250.2V375.3H1250.7V369.9H1251.9V364.6H1253.2V359.2H1253.4V364.6H1253.7V359.2H1254.6V353.9H1255.9V348.6H1256.1V353.9H1256.4V348.6H1257.6V343.2H1259.1V337.9H1260.3V332.5H1261.6V327.1H1262.1V332.5H1262.3V327.1H1263.5V321.8H1264.8V316.4H1266.5V311.1H1268.0V305.8H1269.5V300.4H1270.9V295.1H1271.2V300.4H1271.4V295.1H1272.2V289.7H1274.4V284.4H1275.9V279.0H1276.1V284.4H1276.9V279.0H1277.6V273.6H1277.9V279.0H1278.1V273.6H1278.4V279.0H1278.6V273.6H1279.1V268.3H1279.4V273.6H1279.8V268.3H1280.1V273.6H1280.3V268.3H1282.3V262.9H1283.6V257.6H1283.8V262.9H1284.0V257.6H1286.0V252.2H1286.3V257.6H1287.0V252.2H1288.7V246.9H1291.7V241.6H1292.2V246.9H1292.4V241.6H1294.4V236.2H1294.7V241.6H1294.9V236.2H1298.4V230.8H1299.1V236.2H1299.4V230.8H1299.6V236.2H1299.9V230.8H1301.3V225.5H1301.6V230.8H1303.6V225.5H1303.8V230.8H1304.3V225.5H1306.5V230.8H1306.8V225.5H1307.0V230.8H1307.3V225.5H1316.7V230.8H1316.9V225.5H1317.9V230.8H1318.4V225.5H1318.9V230.8H1319.4V225.5H1319.9V230.8H1323.6V236.2H1324.1V230.8H1324.3V236.2H1327.8V241.6H1328.0V236.2H1328.3V241.6H1328.8V236.2H1329.0V241.6H1330.5V246.9H1330.7V241.6H1331.7V246.9H1333.7V252.2H1336.2V257.6H1338.4V262.9H1339.6V257.6H1339.9V262.9H1340.6V268.3H1340.9V262.9H1341.1V268.3H1341.4V262.9H1341.6V268.3H1343.1V273.6H1344.8V279.0H1346.8V284.4H1348.0V289.7H1348.3V284.4H1348.5V289.7H1348.8V284.4H1349.0V289.7H1350.3V295.1H1351.8V300.4H1353.2V305.8H1353.5V300.4H1353.7V305.8H1355.2V311.1H1356.4V316.4H1356.7V311.1H1356.9V316.4H1358.4V321.8H1358.7V316.4H1358.9V321.8H1359.9V327.1H1360.6V332.5H1361.1V327.1H1361.4V332.5H1362.4V337.9H1363.6V343.2H1365.3V348.6H1365.6V343.2H1365.8V348.6H1366.8V353.9H1367.1V348.6H1367.3V353.9H1368.3V359.2H1368.6V353.9H1368.8V359.2H1369.8V364.6H1371.5V369.9H1373.0V375.3H1374.0V380.6H1375.2V386.0H1376.7V391.4H1377.0V386.0H1377.2V391.4H1377.9V396.7H1378.2V391.4H1378.4V396.7H1379.4V402.0H1380.7V407.4H1380.9V402.0H1381.2V407.4H1382.6V412.8H1383.1V418.1H1383.4V412.8H1383.9V418.1H1385.1V423.4H1385.4V418.1H1385.6V423.4H1386.1V428.8H1386.3V423.4H1386.6V428.8H1388.1V434.1H1388.3V428.8H1388.6V434.1H1390.3V439.5H1391.3V444.9H1393.0V450.2H1394.5V455.5H1396.2V460.9H1398.0V466.2H1399.4V471.6H1400.9V476.9H1401.2V471.6H1401.7V476.9H1403.1V482.3H1405.1V487.6H1406.9V493.0H1407.1V487.6H1407.8V493.0H1410.1V498.3H1412.0V503.7H1412.3V498.3H1412.8V503.7H1414.8V509.0H1418.5V514.4H1421.4V519.8H1421.9V514.4H1422.2V519.8H1427.1V525.1H1427.4V519.8H1427.6V525.1H1428.4V519.8H1428.8V525.1H1434.6" stroke="#1cf01c" stroke-width="1.0" fill="none" shape-rendering="auto" stroke-linejoin="miter" opacity="0.95"/>
<rect x="200.6" y="156.6" width="1235.2" height="430" fill="none" stroke="#fff" stroke-width="2.3" shape-rendering="auto"/>
</svg>
<svg class="a" style="left:180px;top:366px" width="20" height="17" viewBox="180 366 20 17"><path d="M180.9 369H193L198 374.5L193 380H180.9Z" fill="#20ee20"/><text x="185.8" y="379.8" font-family="Liberation Serif,serif" font-weight="bold" font-size="12.5" fill="#000">2</text></svg>
<div class="sbox" style="left:200px;top:591px;width:92px;color:#ffff40"><span class="a" style="left:2.5px">CH1</span><span class="a" style="left:50px;letter-spacing:0.15px">500mV</span>
<svg class="a" style="left:29px;top:6px" width="12" height="8" viewBox="0 0 12 8"><path d="M1 5.5H11" stroke="#ffff40" stroke-width="1"/><path d="M1 2.5H11" stroke="#ffff40" stroke-width="1" stroke-dasharray="1.5 1.5"/></svg></div>
<div class="sbox" style="left:340px;top:591px;width:92px;color:#19e619"><span class="a" style="left:2.5px">CH2</span><span class="a" style="left:50px;letter-spacing:0.15px">500mV</span>
<svg class="a" style="left:29px;top:6px" width="12" height="8" viewBox="0 0 12 8"><path d="M1 5.5H11" stroke="#19e619" stroke-width="1"/><path d="M1 2.5H11" stroke="#19e619" stroke-width="1" stroke-dasharray="1.5 1.5"/></svg></div>
<div class="sbox" style="left:1225.5px;top:591px;width:210px;color:#f28a3a"><span class="a" style="left:3px;letter-spacing:0.2px">Time: 500.0us</span><span class="a" style="left:99.7px;letter-spacing:0.1px">Sample Rate: 1MHz</span></div>
<!-- right panel -->
<div class="a" id="rgap"></div>
<div class="a" id="rpanel"></div>
<div class="a" id="rhead"></div>
<div class="t" style="left:1470px;top:83px;letter-spacing:-0.1px">Control Panel</div>
<div class="a" id="rcombo"></div>
<div class="t" style="left:1470px;top:105px;letter-spacing:-0.25px">Scope</div>
<div class="a" id="rstrip"></div>
<div class="grp" style="left:1471px;top:159px;width:203px;height:117.5px"><span style="left:75.5px;font-size:11px;letter-spacing:-0.2px">Horizontal</span></div>
<div class="t" style="left:1481px;top:172.2px;font-size:11px;letter-spacing:-0.5px">Time/DIV</div>
<div class="combo" style="left:1480.3px;top:191px;letter-spacing:0.15px">500.0us<svg width="9" height="6" viewBox="0 0 9 6"><path d="M0.6 0.6L4.5 4.5L8.4 0.6" stroke="#484848" stroke-width="1.15" fill="none"/></svg></div>
<div class="t" style="left:1481px;top:222px;font-size:11px;letter-spacing:-0.3px">Format</div>
<div class="combo" style="left:1480.3px;top:243px;letter-spacing:0.2px">Y-T<svg width="9" height="6" viewBox="0 0 9 6"><path d="M0.6 0.6L4.5 4.5L8.4 0.6" stroke="#484848" stroke-width="1.15" fill="none"/></svg></div>
<svg class="a" style="left:1572.5px;top:181.8px" width="84" height="84" viewBox="-42 -42 84 84"><ellipse cx="0" cy="-0.8" rx="37.5" ry="34.9" fill="#fff" stroke="#111" stroke-width="1"/><ellipse cx="0" cy="0" rx="34.9" ry="33" fill="#b6b6b6" stroke="#111" stroke-width="1"/><path d="M24.3 -22.9A34.3 32.4 0 0 0 -24.3 22.9Z" fill="#d3d3d3"/><path d="M-22.8 21.6L-31 30.4M23 21.8L31.3 30.4" stroke="#111" stroke-width="1.3"/><ellipse cx="0.1" cy="0.3" rx="28.3" ry="27.4" fill="#0808cc" stroke="#222" stroke-width="0.8"/><path d="M8 -21.5L2.2 -4.6" stroke="#fff" stroke-width="1.5" stroke-linecap="round"/></svg>
<div class="grp" style="left:1471px;top:296px;width:203px;height:283.5px"><span style="left:82.5px;font-size:11px">Vertical</span></div>
<div class="cb" style="left:1480.3px;top:313px"><svg width="11" height="11" viewBox="0 0 11 11"><path d="M1.5 5.5L4.3 8.5L9.8 2" stroke="#222" stroke-width="1.2" fill="none"/></svg></div>
<div class="t" style="left:1496.3px;top:313.3px;font-size:11px;letter-spacing:-1.3px">CH1</div>
<div class="combo" style="left:1480.3px;top:334px;letter-spacing:-0.15px">500mV<svg width="9" height="6" viewBox="0 0 9 6"><path d="M0.6 0.6L4.5 4.5L8.4 0.6" stroke="#484848" stroke-width="1.15" fill="none"/></svg></div>
<div class="combo dis" style="left:1480.3px;top:369px;letter-spacing:-0.6px">DC<svg width="9" height="6" viewBox="0 0 9 6"><path d="M0.6 0.6L4.5 4.5L8.4 0.6" stroke="#b4b4b4" stroke-width="1.15" fill="none"/></svg></div>
<div class="combo" style="left:1480.3px;top:404px;letter-spacing:0px">x10<svg width="9" height="6" viewBox="0 0 9 6"><path d="M0.6 0.6L4.5 4.5L8.4 0.6" stroke="#484848" stroke-width="1.15" fill="none"/></svg></div>
<svg class="a" style="left:1572.5px;top:316.8px" width="84" height="84" viewBox="-42 -42 84 84"><ellipse cx="0" cy="-0.8" rx="37.5" ry="34.9" fill="#fff" stroke="#111" stroke-width="1"/><ellipse cx="0" cy="0" rx="34.9" ry="33" fill="#b6b6b6" stroke="#111" stroke-width="1"/><path d="M24.3 -22.9A34.3 32.4 0 0 0 -24.3 22.9Z" fill="#d3d3d3"/><path d="M-22.8 21.6L-31 30.4M23 21.8L31.3 30.4" stroke="#111" stroke-width="1.3"/><ellipse cx="0.1" cy="0.3" rx="28.3" ry="27.4" fill="#ffff19" stroke="#222" stroke-width="0.8"/><path d="M6 1.7L22.5 3.8" stroke="#f2eeb0" stroke-width="1.8" stroke-linecap="round"/></svg>
<div class="cb" style="left:1591.3px;top:411px"></div>
<div class="t" style="left:1607.3px;top:410.3px;font-size:11px;">Invert</div>
<div class="cb" style="left:1480.3px;top:453px"><svg width="11" height="11" viewBox="0 0 11 11"><path d="M1.5 5.5L4.3 8.5L9.8 2" stroke="#222" stroke-width="1.2" fill="none"/></svg></div>
<div class="t" style="left:1496.3px;top:453.3px;font-size:11px;letter-spacing:-1.3px">CH2</div>
<div class="combo" style="left:1480.3px;top:474px;letter-spacing:-0.15px">500mV<svg width="9" height="6" viewBox="0 0 9 6"><path d="M0.6 0.6L4.5 4.5L8.4 0.6" stroke="#484848" stroke-width="1.15" fill="none"/></svg></div>
<div class="combo dis" style="left:1480.3px;top:509px;letter-spacing:-0.6px">DC<svg width="9" height="6" viewBox="0 0 9 6"><path d="M0.6 0.6L4.5 4.5L8.4 0.6" stroke="#b4b4b4" stroke-width="1.15" fill="none"/></svg></div>
<div class="combo" style="left:1480.3px;top:544px;letter-spacing:0px">x10<svg width="9" height="6" viewBox="0 0 9 6"><path d="M0.6 0.6L4.5 4.5L8.4 0.6" stroke="#484848" stroke-width="1.15" fill="none"/></svg></div>
<svg class="a" style="left:1572.5px;top:458.9px" width="84" height="84" viewBox="-42 -42 84 84"><ellipse cx="0" cy="-0.8" rx="37.5" ry="34.9" fill="#fff" stroke="#111" stroke-width="1"/><ellipse cx="0" cy="0" rx="34.9" ry="33" fill="#b6b6b6" stroke="#111" stroke-width="1"/><path d="M24.3 -22.9A34.3 32.4 0 0 0 -24.3 22.9Z" fill="#d3d3d3"/><path d="M-22.8 21.6L-31 30.4M23 21.8L31.3 30.4" stroke="#111" stroke-width="1.3"/><ellipse cx="0.1" cy="0.3" rx="28.3" ry="27.4" fill="#12f812" stroke="#222" stroke-width="0.8"/><path d="M6 1.7L22.5 3.8" stroke="#b8f0b8" stroke-width="1.8" stroke-linecap="round"/></svg>
<div class="cb" style="left:1591.3px;top:551px"></div>
<div class="t" style="left:1607.3px;top:550.3px;font-size:11px;">Invert</div>
<div class="a" style="left:1465px;top:590px;width:260px;height:32px;overflow:hidden"><div class="grp" style="left:6px;top:10px;width:203px;height:60px"><span style="left:81.5px;top:-10px;font-size:11px">Trigger</span></div></div>
<!-- output -->
<div class="a" id="ohead"></div>
<div class="t" style="left:177px;top:626px;letter-spacing:0.25px">Output</div>
<div class="a" id="opanel">
<div class="a" style="left:0;top:0;width:18.7px;height:190.6px;background:#f0f0f0"></div>
<div class="a" style="left:213px;top:19.6px;width:1px;height:290px;background:#f0f0f0"></div>
<div class="ohdr" style="top:0.6px"></div>
<svg class="a" style="left:4.7px;top:5.1px" width="9" height="9" viewBox="0 0 9 9"><rect x="0.5" y="0.5" width="8" height="8" fill="#fff" stroke="#8a8a8a" stroke-width="1"/><path d="M2.5 4.5H6.5" stroke="#444" stroke-width="1"/></svg>
<div class="t" style="left:23px;top:3.1px;font-weight:bold;color:#6d6d6d;letter-spacing:-0.9px">CH1</div>
<div class="a" style="left:18.7px;top:38.1px;width:1540px;height:1px;background:#f0f0f0"></div>
<div class="t" style="left:23px;top:22.1px;letter-spacing:-0.4px">Peak to Peak</div>
<div class="t" style="left:217.5px;top:22.1px;letter-spacing:-0.5px">2.81V</div>
<div class="a" style="left:18.7px;top:57.1px;width:1540px;height:1px;background:#f0f0f0"></div>
<div class="t" style="left:23px;top:41.1px;letter-spacing:-0.8px">RMS</div>
<div class="t" style="left:217.5px;top:41.1px;letter-spacing:-0.5px">969mV</div>
<div class="a" style="left:18.7px;top:76.1px;width:1540px;height:1px;background:#f0f0f0"></div>
<div class="t" style="left:23px;top:60.1px;letter-spacing:0.3px">Amplitude</div>
<div class="t" style="left:217.5px;top:60.1px;letter-spacing:-0.5px">2.78V</div>
<div class="a" style="left:18.7px;top:95.1px;width:1540px;height:1px;background:#f0f0f0"></div>
<div class="t" style="left:23px;top:79.1px;letter-spacing:-0.25px">Frequency</div>
<div class="t" style="left:217.5px;top:79.1px;letter-spacing:-0.5px">1.000KHz</div>
<div class="ohdr" style="top:95.6px"></div>
<svg class="a" style="left:4.7px;top:100.1px" width="9" height="9" viewBox="0 0 9 9"><rect x="0.5" y="0.5" width="8" height="8" fill="#fff" stroke="#8a8a8a" stroke-width="1"/><path d="M2.5 4.5H6.5" stroke="#444" stroke-width="1"/></svg>
<div class="t" style="left:23px;top:98.1px;font-weight:bold;color:#6d6d6d;letter-spacing:-0.9px">CH2</div>
<div class="a" style="left:18.7px;top:133.1px;width:1540px;height:1px;background:#f0f0f0"></div>
<div class="t" style="left:23px;top:117.1px;letter-spacing:-0.4px">Peak to Peak</div>
<div class="t" style="left:217.5px;top:117.1px;letter-spacing:-0.5px">2.78V</div>
<div class="a" style="left:18.7px;top:152.1px;width:1540px;height:1px;background:#f0f0f0"></div>
<div class="t" style="left:23px;top:136.1px;letter-spacing:-0.8px">RMS</div>
<div class="t" style="left:217.5px;top:136.1px;letter-spacing:-0.5px">966mV</div>
<div class="a" style="left:18.7px;top:171.1px;width:1540px;height:1px;background:#f0f0f0"></div>
<div class="t" style="left:23px;top:155.1px;letter-spacing:0.3px">Amplitude</div>
<div class="t" style="left:217.5px;top:155.1px;letter-spacing:-0.5px">2.78V</div>
<div class="a" style="left:18.7px;top:190.1px;width:1540px;height:1px;background:#f0f0f0"></div>
<div class="t" style="left:23px;top:174.1px;letter-spacing:-0.25px">Frequency</div>
<div class="t" style="left:217.5px;top:174.1px;letter-spacing:-0.5px">1.000KHz</div>
</div>
</body></html>
